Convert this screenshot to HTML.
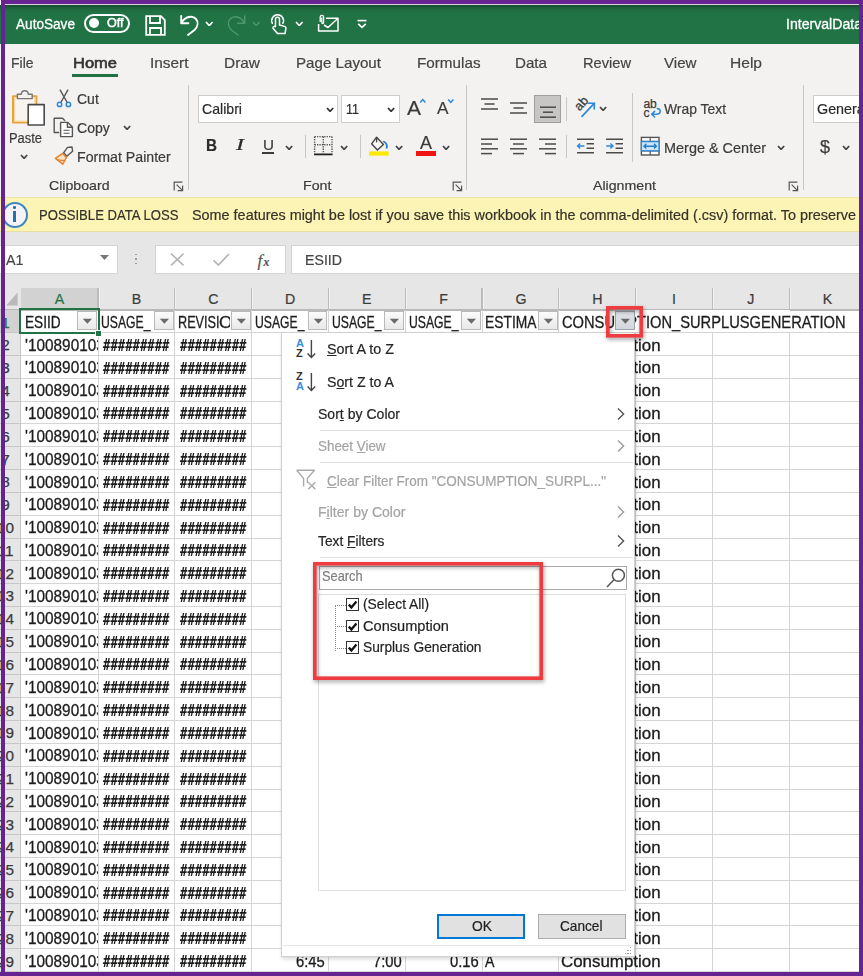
<!DOCTYPE html>
<html lang="en"><head><meta charset="utf-8"><title>Excel filter</title><style>
html,body{margin:0;padding:0}
body{width:863px;height:976px;overflow:hidden;position:relative;background:#f3f2f1;font-family:"Liberation Sans",sans-serif;}
.a{position:absolute;box-sizing:border-box}
.t{position:absolute;white-space:pre;line-height:1;transform-origin:0 0;display:block;-webkit-text-stroke-width:0.2px}
.c{position:absolute;overflow:hidden;box-sizing:border-box}
</style></head><body>
<div class="a" style="left:0px;top:0px;width:863px;height:44px;background:#217346;background:linear-gradient(#174a2d 0,#174a2d 5px,#1b5b37 7px,#1f6c41 10px,#217346 14px);"></div>
<div class="a" style="left:0px;top:44px;width:863px;height:153px;background:#f3f2f1;"></div>
<span class="t" id="t1" style="left:16px;top:16.57px;font-size:14.5px;color:#ffffff;transform:scaleX(0.9381);-webkit-text-stroke-width:0.3px;">AutoSave</span>
<div class="a" style="left:84px;top:13.5px;width:46px;height:19px;border:2px solid #fff;border-radius:10px"></div>
<div class="a" style="left:88.5px;top:18px;width:10px;height:10px;background:#fff;border-radius:5px"></div>
<span class="t" id="t2" style="left:107px;top:16.98px;font-size:12.5px;color:#ffffff;transform:scaleX(1.0028);-webkit-text-stroke-width:0.5px;">Off</span>
<svg class="a" style="left:144px;top:14px;" width="23" height="23" viewBox="0 0 23 23"><g fill="none" stroke="#fff" stroke-width="1.8"><path d="M2.2 2.2 H17 L20.8 6 V20.8 H2.2 Z"/><path d="M6 2.2 V9 H16 V2.2"/><path d="M6 20.8 V14 H17 V20.8"/></g></svg>
<svg class="a" style="left:178px;top:12px;" width="24" height="26" viewBox="0 0 24 26"><g fill="none" stroke="#fff" stroke-width="1.9" stroke-linecap="round" stroke-linejoin="round"><path d="M3.2 4 V11.2 H10.4"/><path d="M3.6 10.8 C7 4.5 14.5 3 18 7 C21 10.5 19.5 15 16.5 18 L10 23"/></g></svg>
<svg class="a" style="left:205px;top:20.5px;" width="8.6" height="5.6" viewBox="0 0 8.6 5.6"><path d="M1 1 L4.3 4.6 L7.6 1" fill="none" stroke="#ffffff" stroke-width="1.6"/></svg>
<svg class="a" style="left:224px;top:12px;" width="24" height="26" viewBox="0 0 24 26"><g fill="none" stroke="#4f966f" stroke-width="1.5" stroke-linecap="round" stroke-linejoin="round"><path d="M20.8 4 V11.2 H13.6"/><path d="M20.4 10.8 C17 4.5 9.5 3 6 7 C3 10.5 4.5 15 7.5 18 L14 23"/></g></svg>
<svg class="a" style="left:252px;top:20.5px;" width="8.6" height="5.6" viewBox="0 0 8.6 5.6"><path d="M1 1 L4.3 4.6 L7.6 1" fill="none" stroke="#4f966f" stroke-width="1.4"/></svg>
<svg class="a" style="left:268px;top:13px;" width="20" height="24" viewBox="0 0 20 24"><g fill="none" stroke="#fff" stroke-width="1.5" stroke-linecap="round" stroke-linejoin="round"><path d="M7.5 12.5 V6.2 a2 2 0 0 1 4 0 V12 l5 1.4 a2 2 0 0 1 1.4 2.3 l-0.9 4.8 H9.5 L5 15.2 a1.6 1.6 0 0 1 2.5 -1.6"/><path d="M4.4 10.4 a5.9 5.9 0 1 1 10.4 0"/></g></svg>
<svg class="a" style="left:295px;top:20.5px;" width="8.6" height="5.6" viewBox="0 0 8.6 5.6"><path d="M1 1 L4.3 4.6 L7.6 1" fill="none" stroke="#ffffff" stroke-width="1.6"/></svg>
<svg class="a" style="left:316px;top:13px;" width="25" height="21" viewBox="0 0 25 21"><g fill="none" stroke="#fff" stroke-width="1.5" stroke-linejoin="round"><path d="M10 5.2 H22 V18 H2.6 V11"/><path d="M8 12 L12 14.5 L21.5 5.8"/><path d="M4.2 9 V4 a1.7 1.7 0 0 1 3.4 0 V9.6 a0.9 0.9 0 0 1 -1.8 0 V4.6" stroke-width="1.3"/></g></svg>
<svg class="a" style="left:356px;top:18px;" width="12" height="12" viewBox="0 0 12 12"><g fill="none" stroke="#fff" stroke-width="1.6"><path d="M1.5 2.6 H10.5"/><path d="M2.2 5.8 L6 9.4 L9.8 5.8"/></g></svg>
<span class="t" id="t3" style="left:786px;top:16.57px;font-size:14.5px;color:#ffffff;transform:scaleX(0.9720);-webkit-text-stroke-width:0.3px;">IntervalData</span>
<span class="t" id="t4" style="left:11px;top:55.45px;font-size:15px;color:#444;transform:scaleX(0.9308);">File</span>
<span class="t" id="t5" style="left:150px;top:55.45px;font-size:15px;color:#444;transform:scaleX(1.0262);">Insert</span>
<span class="t" id="t6" style="left:223.5px;top:55.45px;font-size:15px;color:#444;transform:scaleX(1.0281);">Draw</span>
<span class="t" id="t7" style="left:295.5px;top:55.45px;font-size:15px;color:#444;transform:scaleX(1.0089);">Page Layout</span>
<span class="t" id="t8" style="left:416.5px;top:55.45px;font-size:15px;color:#444;transform:scaleX(1.0157);">Formulas</span>
<span class="t" id="t9" style="left:515px;top:55.45px;font-size:15px;color:#444;transform:scaleX(1.0099);">Data</span>
<span class="t" id="t10" style="left:582.5px;top:55.45px;font-size:15px;color:#444;transform:scaleX(0.9759);">Review</span>
<span class="t" id="t11" style="left:664px;top:55.45px;font-size:15px;color:#444;transform:scaleX(1.0078);">View</span>
<span class="t" id="t12" style="left:730px;top:55.45px;font-size:15px;color:#444;transform:scaleX(1.0370);">Help</span>
<span class="t" id="t13" style="left:72.5px;top:55.45px;font-size:15px;color:#333;transform:scaleX(1.0996);-webkit-text-stroke-width:0.6px;">Home</span>
<div class="a" style="left:72px;top:74px;width:45.5px;height:3px;background:#217346;"></div>
<svg class="a" style="left:10px;top:88px;" width="38" height="40" viewBox="0 0 38 40"><g fill="none" stroke-linejoin="round">
<path d="M3 8.2 H26.4 V34.6 H3 Z" fill="#f8f5f1" stroke="#e9a13b" stroke-width="2"/>
<path d="M4.6 9.8 H24.8 V33 H4.6 Z" fill="none" stroke="#fbdba4" stroke-width="1.2"/>
<path d="M7.4 10.6 V6.2 H11.4 a3.4 3.4 0 0 1 6.8 0 H22.2 V10.6 Z" fill="#f3f2f1" stroke="#777" stroke-width="1.4"/>
<path d="M18.2 16.6 H34.2 V37 H18.2 Z" fill="#fff" stroke="#4a4a4a" stroke-width="1.6"/></g></svg>
<span class="t" id="t14" style="left:9.1px;top:131.4px;font-size:14px;color:#3b3b3b;transform:scaleX(0.9215);">Paste</span>
<svg class="a" style="left:20px;top:154px;" width="8.2" height="5.4" viewBox="0 0 8.2 5.4"><path d="M1 1 L4.1 4.4 L7.2 1" fill="none" stroke="#444" stroke-width="1.7"/></svg>
<svg class="a" style="left:55px;top:88px;" width="18" height="21" viewBox="0 0 18 21"><g fill="none" stroke-linecap="round"><path d="M5.2 2.2 L12.2 14.5 M12.8 2.2 L5.8 14.5" stroke="#555" stroke-width="1.4"/>
<circle cx="4.6" cy="16.4" r="2.2" stroke="#2b88d8" stroke-width="1.5"/><circle cx="13.4" cy="16.4" r="2.2" stroke="#2b88d8" stroke-width="1.5"/></g></svg>
<span class="t" id="t15" style="left:77.3px;top:92.2px;font-size:14px;color:#3b3b3b;transform:scaleX(1.0001);">Cut</span>
<svg class="a" style="left:52px;top:116px;" width="23" height="22" viewBox="0 0 23 22"><g fill="none" stroke="#555" stroke-width="1.4" stroke-linejoin="round"><path d="M7.2 16.5 H2.2 V2.2 H10.5 L13 4.7"/>
<path d="M8.6 6.4 H15.8 L20.4 11 V20.6 H8.6 Z" fill="#fff"/><path d="M15.4 6.6 V11.2 H20.2"/><path d="M11.5 14.2 H17.6 M11.5 17.2 H17.6" stroke-width="1.1"/></g></svg>
<span class="t" id="t16" style="left:77.3px;top:121.1px;font-size:14px;color:#3b3b3b;transform:scaleX(1.0034);">Copy</span>
<svg class="a" style="left:122.5px;top:125px;" width="8.2" height="5.4" viewBox="0 0 8.2 5.4"><path d="M1 1 L4.1 4.4 L7.2 1" fill="none" stroke="#444" stroke-width="1.7"/></svg>
<svg class="a" style="left:53px;top:145px;" width="22" height="22" viewBox="0 0 22 22"><g stroke-linejoin="round"><path d="M14.5 2.4 L19 2 L19.6 6.2 L13.8 11.2 L10.6 7.8 Z" fill="#f3f2f1" stroke="#555" stroke-width="1.4"/>
<path d="M2.4 13.4 L9.6 8.4 L13.4 12.4 L11.6 16 L9.8 19.2 Z" fill="#fbe3c3" stroke="#e8812d" stroke-width="1.5"/><path d="M4.5 14.8 L11.8 15.6" stroke="#e8812d" stroke-width="1.2"/></g></svg>
<span class="t" id="t17" style="left:77.3px;top:149.6px;font-size:14px;color:#3b3b3b;transform:scaleX(1.0119);">Format Painter</span>
<span class="t" id="t18" style="left:48.5px;top:179.03px;font-size:13.5px;color:#3b3b3b;transform:scaleX(1.0468);">Clipboard</span>
<svg class="a" style="left:173px;top:181px;" width="11" height="11" viewBox="0 0 11 11"><g fill="none" stroke="#555" stroke-width="1.2"><path d="M9.4 1.2 H1.2 V9.4"/><path d="M3.6 3.6 L9.2 9.2 M9.6 4.6 V9.6 H4.6"/></g></svg>
<div class="a" style="left:187.5px;top:85px;width:1px;height:105px;background:#c8c6c4;"></div>
<div class="a" style="left:198px;top:95px;width:140px;height:27.5px;background:#fff;border:1px solid #d0cecc;"></div>
<span class="t" id="t19" style="left:202px;top:101.25px;font-size:15px;color:#2b2b2b;transform:scaleX(0.9408);">Calibri</span>
<svg class="a" style="left:325.5px;top:106.5px;" width="8.2" height="5.4" viewBox="0 0 8.2 5.4"><path d="M1 1 L4.1 4.4 L7.2 1" fill="none" stroke="#333" stroke-width="1.7"/></svg>
<div class="a" style="left:341px;top:95px;width:58.5px;height:27.5px;background:#fff;border:1px solid #d0cecc;"></div>
<span class="t" id="t20" style="left:345.5px;top:101.25px;font-size:15px;color:#2b2b2b;transform:scaleX(0.8345);">11</span>
<svg class="a" style="left:387px;top:106.5px;" width="8.2" height="5.4" viewBox="0 0 8.2 5.4"><path d="M1 1 L4.1 4.4 L7.2 1" fill="none" stroke="#333" stroke-width="1.7"/></svg>
<span class="t" id="t21" style="left:406.5px;top:96.65px;font-size:21px;color:#3b3b3b;transform:scaleX(0.9989);">A</span>
<svg class="a" style="left:419px;top:98px;" width="8" height="6" viewBox="0 0 8 6"><path d="M1.2 4.6 L3.8 1.6 L6.4 4.6" fill="none" stroke="#2b88d8" stroke-width="1.5"/></svg>
<span class="t" id="t22" style="left:437px;top:100.05px;font-size:17px;color:#3b3b3b;transform:scaleX(1.0138);">A</span>
<svg class="a" style="left:447px;top:98px;" width="8" height="6" viewBox="0 0 8 6"><path d="M1.2 1.4 L3.8 4.4 L6.4 1.4" fill="none" stroke="#2b88d8" stroke-width="1.5"/></svg>
<span class="t" id="t23" style="left:206px;top:137.9px;font-size:16px;color:#2b2b2b;font-weight:bold;transform:scaleX(0.9514);">B</span>
<span class="t" id="t24" style="left:235.6px;top:137.47px;font-size:16.5px;color:#2b2b2b;font-style:italic;font-family:'Liberation Serif',serif;transform:scaleX(1.4545);">I</span>
<span class="t" id="t25" style="left:262.5px;top:137.32px;font-size:15.5px;color:#3b3b3b;transform:scaleX(0.9819);">U</span>
<div class="a" style="left:262.3px;top:152.3px;width:11.4px;height:1.7px;background:#3b3b3b;"></div>
<svg class="a" style="left:285px;top:144.5px;" width="8.2" height="5.4" viewBox="0 0 8.2 5.4"><path d="M1 1 L4.1 4.4 L7.2 1" fill="none" stroke="#444" stroke-width="1.7"/></svg>
<div class="a" style="left:305px;top:135px;width:1px;height:23px;background:#c8c6c4;"></div>
<svg class="a" style="left:313px;top:135px;" width="21" height="22" viewBox="0 0 21 22"><g fill="none" stroke="#555" stroke-width="1.4" stroke-dasharray="1.3 1.1"><path d="M1.6 1.6 H19 M1.6 1.6 V18 M19 1.6 V18 M10.3 1.6 V18 M1.6 9.8 H19"/></g><path d="M1 19.4 H19.6" stroke="#222" stroke-width="1.8"/></svg>
<svg class="a" style="left:340px;top:144.5px;" width="8.2" height="5.4" viewBox="0 0 8.2 5.4"><path d="M1 1 L4.1 4.4 L7.2 1" fill="none" stroke="#444" stroke-width="1.7"/></svg>
<div class="a" style="left:360px;top:135px;width:1px;height:23px;background:#c8c6c4;"></div>
<svg class="a" style="left:368px;top:134px;" width="22" height="24" viewBox="0 0 22 24"><g fill="none" stroke-linejoin="round"><path d="M8.6 3.2 L15.4 10.4 L9.4 16 L3.6 9.8 Z" stroke="#444" stroke-width="1.4" fill="#f8f8f8"/><path d="M8.6 3.2 V8.4" stroke="#444" stroke-width="1.3"/>
<path d="M15.2 7.2 C18.4 8.6 19.4 11.4 18.6 14.4" stroke="#2b7cd3" stroke-width="1.8"/></g><rect x="1" y="17.4" width="19.6" height="4.2" fill="#ffeb00"/></svg>
<svg class="a" style="left:395px;top:144.5px;" width="8.2" height="5.4" viewBox="0 0 8.2 5.4"><path d="M1 1 L4.1 4.4 L7.2 1" fill="none" stroke="#444" stroke-width="1.7"/></svg>
<span class="t" id="t26" style="left:420px;top:135.12px;font-size:17.5px;color:#3b3b3b;transform:scaleX(1.0267);">A</span>
<div class="a" style="left:416px;top:151.4px;width:20px;height:4.2px;background:#f01515;"></div>
<svg class="a" style="left:442px;top:144.5px;" width="8.2" height="5.4" viewBox="0 0 8.2 5.4"><path d="M1 1 L4.1 4.4 L7.2 1" fill="none" stroke="#444" stroke-width="1.7"/></svg>
<span class="t" id="t27" style="left:302.5px;top:179.03px;font-size:13.5px;color:#3b3b3b;transform:scaleX(1.0549);">Font</span>
<svg class="a" style="left:451.5px;top:181px;" width="11" height="11" viewBox="0 0 11 11"><g fill="none" stroke="#555" stroke-width="1.2"><path d="M9.4 1.2 H1.2 V9.4"/><path d="M3.6 3.6 L9.2 9.2 M9.6 4.6 V9.6 H4.6"/></g></svg>
<div class="a" style="left:466px;top:85px;width:1px;height:105px;background:#c8c6c4;"></div>
<svg class="a" style="left:480px;top:95px;" width="20" height="20" viewBox="0 0 20 20"><g stroke="#4a4a4a" stroke-width="1.5"><path d="M1 4 H18"/><path d="M4.5 9 H14.5"/><path d="M1 14 H18"/></g></svg>
<svg class="a" style="left:509px;top:99px;" width="20" height="20" viewBox="0 0 20 20"><g stroke="#4a4a4a" stroke-width="1.5"><path d="M1 4 H18"/><path d="M4.5 9 H14.5"/><path d="M1 14 H18"/></g></svg>
<div class="a" style="left:534px;top:95px;width:26.5px;height:27.5px;background:#c8c6c4;border:1px solid #a19f9d;"></div>
<svg class="a" style="left:538px;top:103px;" width="20" height="20" viewBox="0 0 20 20"><g stroke="#4a4a4a" stroke-width="1.5"><path d="M2 4.2 H18"/><path d="M5 9.2 H15"/><path d="M2 14.2 H18"/></g></svg>
<div class="a" style="left:566px;top:97px;width:1px;height:24px;background:#c8c6c4;"></div>
<svg class="a" style="left:573px;top:95px;" width="26" height="24" viewBox="0 0 26 24"><text x="0" y="0" font-family="Liberation Sans, sans-serif" font-size="12.6" fill="#3b3b3b" stroke="#3b3b3b" stroke-width="0.3" transform="translate(6.4 16.4) rotate(-47)">ab</text>
<g fill="none" stroke="#2b88d8" stroke-width="1.6" stroke-linecap="round"><path d="M9 21.4 L21 8.6"/><path d="M15.4 8.2 L21.4 8.2 L21.2 14"/></g></svg>
<svg class="a" style="left:599px;top:105.5px;" width="8.2" height="5.4" viewBox="0 0 8.2 5.4"><path d="M1 1 L4.1 4.4 L7.2 1" fill="none" stroke="#444" stroke-width="1.7"/></svg>
<svg class="a" style="left:480px;top:135px;" width="20" height="20" viewBox="0 0 20 20"><g stroke="#4a4a4a" stroke-width="1.5"><path d="M1 4.2 H18"/><path d="M1 9 H12"/><path d="M1 13.8 H18"/><path d="M1 18.6 H12"/></g></svg>
<svg class="a" style="left:509px;top:135px;" width="20" height="20" viewBox="0 0 20 20"><g stroke="#4a4a4a" stroke-width="1.5"><path d="M1 4.2 H18"/><path d="M4 9 H15"/><path d="M1 13.8 H18"/><path d="M4 18.6 H15"/></g></svg>
<svg class="a" style="left:538px;top:135px;" width="20" height="20" viewBox="0 0 20 20"><g stroke="#4a4a4a" stroke-width="1.5"><path d="M1 4.2 H18"/><path d="M7 9 H18"/><path d="M1 13.8 H18"/><path d="M7 18.6 H18"/></g></svg>
<div class="a" style="left:566px;top:135px;width:1px;height:23px;background:#c8c6c4;"></div>
<svg class="a" style="left:575.5px;top:137px;" width="20" height="18" viewBox="0 0 20 18"><g stroke="#4a4a4a" stroke-width="1.5"><path d="M1 2.2 H18 M10.6 6.8 H18 M10.6 11.2 H18 M1 15.8 H18"/></g><path d="M1.6 9 H8.4 M4.2 6.4 L1.6 9 L4.2 11.6" stroke="#2b88d8" fill="none" stroke-width="1.4"/></svg>
<svg class="a" style="left:604.5px;top:137px;" width="20" height="18" viewBox="0 0 20 18"><g stroke="#4a4a4a" stroke-width="1.5"><path d="M1 2.2 H18 M10.6 6.8 H18 M10.6 11.2 H18 M1 15.8 H18"/></g><path d="M1.2 9 H8 M5.4 6.4 L8 9 L5.4 11.6" stroke="#2b88d8" fill="none" stroke-width="1.4"/></svg>
<div class="a" style="left:632px;top:93px;width:1px;height:69px;background:#c8c6c4;"></div>
<svg class="a" style="left:641px;top:97px;" width="22" height="22" viewBox="0 0 22 22"><text x="2.4" y="10.6" font-family="Liberation Sans, sans-serif" font-size="12" fill="#3b3b3b" stroke="#3b3b3b" stroke-width="0.25">ab</text><text x="2.4" y="20.2" font-family="Liberation Sans, sans-serif" font-size="12" fill="#3b3b3b" stroke="#3b3b3b" stroke-width="0.25">c</text>
<g fill="none" stroke="#2b88d8" stroke-width="1.6" stroke-linecap="round" stroke-linejoin="round"><path d="M16.4 11.6 C20.4 11.8 20.2 17.2 15.4 17.2 H11"/><path d="M13.6 14.4 L10.8 17.2 L13.6 20"/></g></svg>
<span class="t" id="t28" style="left:664px;top:101.25px;font-size:15px;color:#3b3b3b;transform:scaleX(0.9256);">Wrap Text</span>
<svg class="a" style="left:640px;top:136px;" width="21" height="21" viewBox="0 0 21 21"><rect x="1.4" y="1.4" width="17.6" height="17.6" fill="#fff" stroke="#555" stroke-width="1.4"/><path d="M1.4 5.4 H19 M1.4 15 H19 M10.2 1.4 V5.4 M10.2 15 V19" stroke="#555" stroke-width="1.2" fill="none"/>
<rect x="1.4" y="5.6" width="17.6" height="9.2" fill="#cfe6fa" stroke="#2b88d8" stroke-width="1.3"/><path d="M4 10.2 H16.4 M6.4 7.8 L4 10.2 L6.4 12.6 M14 7.8 L16.4 10.2 L14 12.6" stroke="#1e7dc8" stroke-width="1.4" fill="none"/></svg>
<span class="t" id="t29" style="left:664px;top:139.75px;font-size:15px;color:#3b3b3b;transform:scaleX(0.9633);">Merge &amp; Center</span>
<svg class="a" style="left:777px;top:144.5px;" width="8.2" height="5.4" viewBox="0 0 8.2 5.4"><path d="M1 1 L4.1 4.4 L7.2 1" fill="none" stroke="#444" stroke-width="1.7"/></svg>
<span class="t" id="t30" style="left:593px;top:179.03px;font-size:13.5px;color:#3b3b3b;transform:scaleX(1.0492);">Alignment</span>
<svg class="a" style="left:787.5px;top:181px;" width="11" height="11" viewBox="0 0 11 11"><g fill="none" stroke="#555" stroke-width="1.2"><path d="M9.4 1.2 H1.2 V9.4"/><path d="M3.6 3.6 L9.2 9.2 M9.6 4.6 V9.6 H4.6"/></g></svg>
<div class="a" style="left:802.5px;top:85px;width:1px;height:105px;background:#c8c6c4;"></div>
<div class="a" style="left:812.5px;top:95px;width:60px;height:27.5px;background:#fff;border:1px solid #d0cecc;"></div>
<span class="t" id="t31" style="left:817px;top:101.25px;font-size:15px;color:#2b2b2b;transform:scaleX(0.9555);">General</span>
<span class="t" id="t32" style="left:820px;top:136.85px;font-size:19px;color:#3b3b3b;transform:scaleX(0.9453);">$</span>
<svg class="a" style="left:842px;top:144.5px;" width="8.2" height="5.4" viewBox="0 0 8.2 5.4"><path d="M1 1 L4.1 4.4 L7.2 1" fill="none" stroke="#444" stroke-width="1.7"/></svg>
<div class="a" style="left:0px;top:196.5px;width:863px;height:35px;background:#fcf4b4;border-top:1px solid #ece5a4;border-bottom:1px solid #e6dfa0;"></div>
<div class="a" style="left:1.6px;top:201.6px;width:26.4px;height:26.4px;border:2px solid #3a86bd;border-radius:50%;background:#f6f3f6"></div>
<div class="a" style="left:13.2px;top:206.2px;width:2.6px;height:2.6px;background:#1e73b0;border-radius:1.3px;"></div>
<div class="a" style="left:13.3px;top:211.2px;width:2.4px;height:10.6px;background:#1e73b0;"></div>
<span class="t" id="t33" style="left:39.3px;top:207.7px;font-size:14px;color:#35332a;transform:scaleX(0.9370);">POSSIBLE DATA LOSS</span>
<span class="t" id="t34" style="left:192px;top:207.7px;font-size:14px;color:#35332a;transform:scaleX(1.0286);">Some features might be lost if you save this workbook in the comma-delimited (.csv) format. To preserve t</span>
<div class="a" style="left:0px;top:231.5px;width:863px;height:56px;background:#e6e6e6;"></div>
<div class="a" style="left:0px;top:244.5px;width:118px;height:29.5px;background:#fff;border:1px solid #d4d4d4;border-left:0;"></div>
<span class="t" id="t35" style="left:6px;top:251.82px;font-size:15.5px;color:#444;transform:scaleX(0.9226);">A1</span>
<svg class="a" style="left:99px;top:254px;" width="11" height="7" viewBox="0 0 11 7"><path d="M1 1 H10 L5.5 6 Z" fill="#777"/></svg>
<div class="a" style="left:135.3px;top:253.5px;width:1.6px;height:1.6px;background:#9a9a9a;"></div>
<div class="a" style="left:135.3px;top:258px;width:1.6px;height:1.6px;background:#9a9a9a;"></div>
<div class="a" style="left:135.3px;top:262.5px;width:1.6px;height:1.6px;background:#9a9a9a;"></div>
<div class="a" style="left:155px;top:244.5px;width:131px;height:29.5px;background:#fff;border:1px solid #d4d4d4;"></div>
<svg class="a" style="left:169px;top:252px;" width="17" height="15" viewBox="0 0 17 15"><path d="M2 1.6 L14.6 13.4 M14.6 1.6 L2 13.4" stroke="#b4b4b4" stroke-width="1.5" fill="none"/></svg>
<svg class="a" style="left:212px;top:252px;" width="19" height="15" viewBox="0 0 19 15"><path d="M1.6 8.4 L6.4 13 L17 2" stroke="#b4b4b4" stroke-width="1.7" fill="none"/></svg>
<span class="t" id="t36" style="left:257.5px;top:251.55px;font-size:17px;color:#555;font-style:italic;font-family:'Liberation Serif',serif;">f</span>
<span class="t" id="t37" style="left:263.5px;top:257.23px;font-size:11.5px;color:#555;font-weight:bold;font-style:italic;font-family:'Liberation Serif',serif;">x</span>
<div class="a" style="left:290.5px;top:244.5px;width:580px;height:29.5px;background:#fff;border:1px solid #d4d4d4;"></div>
<span class="t" id="t38" style="left:305px;top:251.82px;font-size:15.5px;color:#444;transform:scaleX(0.9139);">ESIID</span>
<div class="a" style="left:0px;top:309.8px;width:863px;height:666.2px;background:#fff;"></div>
<div class="a" style="left:0px;top:287.5px;width:863px;height:22.3px;background:#e6e6e6;"></div>
<div class="a" style="left:21.2px;top:287.5px;width:76.8px;height:21.8px;background:#d2d2d2;"></div>
<svg class="a" style="left:5px;top:291px;" width="14" height="16" viewBox="0 0 14 16"><path d="M12.6 1.4 V14.6 H1.2 Z" fill="#b9b9b9"/></svg>
<span class="t" id="t39" style="left:54.6px;top:291.83px;font-size:14.2px;color:#217346;width:10px;text-align:center;">A</span>
<span class="t" id="t40" style="left:131.4px;top:291.83px;font-size:14.2px;color:#3c3c3c;width:10px;text-align:center;">B</span>
<div class="a" style="left:97.4px;top:287.8px;width:1.2px;height:22px;background:#bcbcbc;"></div>
<div class="a" style="left:98.6px;top:287.8px;width:1px;height:22px;background:rgba(255,255,255,.45);"></div>
<span class="t" id="t41" style="left:208.2px;top:291.83px;font-size:14.2px;color:#3c3c3c;width:10px;text-align:center;">C</span>
<div class="a" style="left:174.2px;top:287.8px;width:1.2px;height:22px;background:#bcbcbc;"></div>
<div class="a" style="left:175.4px;top:287.8px;width:1px;height:22px;background:rgba(255,255,255,.45);"></div>
<span class="t" id="t42" style="left:285px;top:291.83px;font-size:14.2px;color:#3c3c3c;width:10px;text-align:center;">D</span>
<div class="a" style="left:251px;top:287.8px;width:1.2px;height:22px;background:#bcbcbc;"></div>
<div class="a" style="left:252.2px;top:287.8px;width:1px;height:22px;background:rgba(255,255,255,.45);"></div>
<span class="t" id="t43" style="left:361.8px;top:291.83px;font-size:14.2px;color:#3c3c3c;width:10px;text-align:center;">E</span>
<div class="a" style="left:327.8px;top:287.8px;width:1.2px;height:22px;background:#bcbcbc;"></div>
<div class="a" style="left:329px;top:287.8px;width:1px;height:22px;background:rgba(255,255,255,.45);"></div>
<span class="t" id="t44" style="left:438.6px;top:291.83px;font-size:14.2px;color:#3c3c3c;width:10px;text-align:center;">F</span>
<div class="a" style="left:404.6px;top:287.8px;width:1.2px;height:22px;background:#bcbcbc;"></div>
<div class="a" style="left:405.8px;top:287.8px;width:1px;height:22px;background:rgba(255,255,255,.45);"></div>
<span class="t" id="t45" style="left:515.4px;top:291.83px;font-size:14.2px;color:#3c3c3c;width:10px;text-align:center;">G</span>
<div class="a" style="left:481.4px;top:287.8px;width:1.2px;height:22px;background:#bcbcbc;"></div>
<div class="a" style="left:482.6px;top:287.8px;width:1px;height:22px;background:rgba(255,255,255,.45);"></div>
<span class="t" id="t46" style="left:592.2px;top:291.83px;font-size:14.2px;color:#3c3c3c;width:10px;text-align:center;">H</span>
<div class="a" style="left:558.2px;top:287.8px;width:1.2px;height:22px;background:#bcbcbc;"></div>
<div class="a" style="left:559.4px;top:287.8px;width:1px;height:22px;background:rgba(255,255,255,.45);"></div>
<span class="t" id="t47" style="left:669px;top:291.83px;font-size:14.2px;color:#3c3c3c;width:10px;text-align:center;">I</span>
<div class="a" style="left:635px;top:287.8px;width:1.2px;height:22px;background:#bcbcbc;"></div>
<div class="a" style="left:636.2px;top:287.8px;width:1px;height:22px;background:rgba(255,255,255,.45);"></div>
<span class="t" id="t48" style="left:745.8px;top:291.83px;font-size:14.2px;color:#3c3c3c;width:10px;text-align:center;">J</span>
<div class="a" style="left:711.8px;top:287.8px;width:1.2px;height:22px;background:#bcbcbc;"></div>
<div class="a" style="left:713px;top:287.8px;width:1px;height:22px;background:rgba(255,255,255,.45);"></div>
<span class="t" id="t49" style="left:822.6px;top:291.83px;font-size:14.2px;color:#3c3c3c;width:10px;text-align:center;">K</span>
<div class="a" style="left:788.6px;top:287.8px;width:1.2px;height:22px;background:#bcbcbc;"></div>
<div class="a" style="left:789.8px;top:287.8px;width:1px;height:22px;background:rgba(255,255,255,.45);"></div>
<div class="a" style="left:0px;top:309px;width:863px;height:1.5px;background:#b9b9b9;"></div>
<div class="a" style="left:0px;top:309.8px;width:20.7px;height:666.2px;background:#e6e6e6;border-right:1px solid #c6c6c6;"></div>
<div class="a" style="left:0px;top:309.8px;width:20.7px;height:22.82px;background:#d2d2d2;border-right:2px solid #217346;"></div>
<div class="a" style="left:21.2px;top:332.12px;width:841.8px;height:1px;background:#d5d5d5;"></div>
<div class="a" style="left:0px;top:332.12px;width:20.7px;height:1px;background:#c6c6c6;"></div>
<div class="a" style="left:21.2px;top:354.94px;width:841.8px;height:1px;background:#d5d5d5;"></div>
<div class="a" style="left:0px;top:354.94px;width:20.7px;height:1px;background:#c6c6c6;"></div>
<div class="a" style="left:21.2px;top:377.76px;width:841.8px;height:1px;background:#d5d5d5;"></div>
<div class="a" style="left:0px;top:377.76px;width:20.7px;height:1px;background:#c6c6c6;"></div>
<div class="a" style="left:21.2px;top:400.58px;width:841.8px;height:1px;background:#d5d5d5;"></div>
<div class="a" style="left:0px;top:400.58px;width:20.7px;height:1px;background:#c6c6c6;"></div>
<div class="a" style="left:21.2px;top:423.4px;width:841.8px;height:1px;background:#d5d5d5;"></div>
<div class="a" style="left:0px;top:423.4px;width:20.7px;height:1px;background:#c6c6c6;"></div>
<div class="a" style="left:21.2px;top:446.22px;width:841.8px;height:1px;background:#d5d5d5;"></div>
<div class="a" style="left:0px;top:446.22px;width:20.7px;height:1px;background:#c6c6c6;"></div>
<div class="a" style="left:21.2px;top:469.04px;width:841.8px;height:1px;background:#d5d5d5;"></div>
<div class="a" style="left:0px;top:469.04px;width:20.7px;height:1px;background:#c6c6c6;"></div>
<div class="a" style="left:21.2px;top:491.86px;width:841.8px;height:1px;background:#d5d5d5;"></div>
<div class="a" style="left:0px;top:491.86px;width:20.7px;height:1px;background:#c6c6c6;"></div>
<div class="a" style="left:21.2px;top:514.68px;width:841.8px;height:1px;background:#d5d5d5;"></div>
<div class="a" style="left:0px;top:514.68px;width:20.7px;height:1px;background:#c6c6c6;"></div>
<div class="a" style="left:21.2px;top:537.5px;width:841.8px;height:1px;background:#d5d5d5;"></div>
<div class="a" style="left:0px;top:537.5px;width:20.7px;height:1px;background:#c6c6c6;"></div>
<div class="a" style="left:21.2px;top:560.32px;width:841.8px;height:1px;background:#d5d5d5;"></div>
<div class="a" style="left:0px;top:560.32px;width:20.7px;height:1px;background:#c6c6c6;"></div>
<div class="a" style="left:21.2px;top:583.14px;width:841.8px;height:1px;background:#d5d5d5;"></div>
<div class="a" style="left:0px;top:583.14px;width:20.7px;height:1px;background:#c6c6c6;"></div>
<div class="a" style="left:21.2px;top:605.96px;width:841.8px;height:1px;background:#d5d5d5;"></div>
<div class="a" style="left:0px;top:605.96px;width:20.7px;height:1px;background:#c6c6c6;"></div>
<div class="a" style="left:21.2px;top:628.78px;width:841.8px;height:1px;background:#d5d5d5;"></div>
<div class="a" style="left:0px;top:628.78px;width:20.7px;height:1px;background:#c6c6c6;"></div>
<div class="a" style="left:21.2px;top:651.6px;width:841.8px;height:1px;background:#d5d5d5;"></div>
<div class="a" style="left:0px;top:651.6px;width:20.7px;height:1px;background:#c6c6c6;"></div>
<div class="a" style="left:21.2px;top:674.42px;width:841.8px;height:1px;background:#d5d5d5;"></div>
<div class="a" style="left:0px;top:674.42px;width:20.7px;height:1px;background:#c6c6c6;"></div>
<div class="a" style="left:21.2px;top:697.24px;width:841.8px;height:1px;background:#d5d5d5;"></div>
<div class="a" style="left:0px;top:697.24px;width:20.7px;height:1px;background:#c6c6c6;"></div>
<div class="a" style="left:21.2px;top:720.06px;width:841.8px;height:1px;background:#d5d5d5;"></div>
<div class="a" style="left:0px;top:720.06px;width:20.7px;height:1px;background:#c6c6c6;"></div>
<div class="a" style="left:21.2px;top:742.88px;width:841.8px;height:1px;background:#d5d5d5;"></div>
<div class="a" style="left:0px;top:742.88px;width:20.7px;height:1px;background:#c6c6c6;"></div>
<div class="a" style="left:21.2px;top:765.7px;width:841.8px;height:1px;background:#d5d5d5;"></div>
<div class="a" style="left:0px;top:765.7px;width:20.7px;height:1px;background:#c6c6c6;"></div>
<div class="a" style="left:21.2px;top:788.52px;width:841.8px;height:1px;background:#d5d5d5;"></div>
<div class="a" style="left:0px;top:788.52px;width:20.7px;height:1px;background:#c6c6c6;"></div>
<div class="a" style="left:21.2px;top:811.34px;width:841.8px;height:1px;background:#d5d5d5;"></div>
<div class="a" style="left:0px;top:811.34px;width:20.7px;height:1px;background:#c6c6c6;"></div>
<div class="a" style="left:21.2px;top:834.16px;width:841.8px;height:1px;background:#d5d5d5;"></div>
<div class="a" style="left:0px;top:834.16px;width:20.7px;height:1px;background:#c6c6c6;"></div>
<div class="a" style="left:21.2px;top:856.98px;width:841.8px;height:1px;background:#d5d5d5;"></div>
<div class="a" style="left:0px;top:856.98px;width:20.7px;height:1px;background:#c6c6c6;"></div>
<div class="a" style="left:21.2px;top:879.8px;width:841.8px;height:1px;background:#d5d5d5;"></div>
<div class="a" style="left:0px;top:879.8px;width:20.7px;height:1px;background:#c6c6c6;"></div>
<div class="a" style="left:21.2px;top:902.62px;width:841.8px;height:1px;background:#d5d5d5;"></div>
<div class="a" style="left:0px;top:902.62px;width:20.7px;height:1px;background:#c6c6c6;"></div>
<div class="a" style="left:21.2px;top:925.44px;width:841.8px;height:1px;background:#d5d5d5;"></div>
<div class="a" style="left:0px;top:925.44px;width:20.7px;height:1px;background:#c6c6c6;"></div>
<div class="a" style="left:21.2px;top:948.26px;width:841.8px;height:1px;background:#d5d5d5;"></div>
<div class="a" style="left:0px;top:948.26px;width:20.7px;height:1px;background:#c6c6c6;"></div>
<div class="a" style="left:21.2px;top:971.08px;width:841.8px;height:1px;background:#d5d5d5;"></div>
<div class="a" style="left:0px;top:971.08px;width:20.7px;height:1px;background:#c6c6c6;"></div>
<div class="a" style="left:21.2px;top:993.9px;width:841.8px;height:1px;background:#d5d5d5;"></div>
<div class="a" style="left:0px;top:993.9px;width:20.7px;height:1px;background:#c6c6c6;"></div>
<div class="a" style="left:97.5px;top:309.8px;width:1px;height:666.2px;background:#d5d5d5;"></div>
<div class="a" style="left:174.3px;top:309.8px;width:1px;height:666.2px;background:#d5d5d5;"></div>
<div class="a" style="left:251.1px;top:309.8px;width:1px;height:666.2px;background:#d5d5d5;"></div>
<div class="a" style="left:327.9px;top:309.8px;width:1px;height:666.2px;background:#d5d5d5;"></div>
<div class="a" style="left:404.7px;top:309.8px;width:1px;height:666.2px;background:#d5d5d5;"></div>
<div class="a" style="left:481.5px;top:309.8px;width:1px;height:666.2px;background:#d5d5d5;"></div>
<div class="a" style="left:558.3px;top:309.8px;width:1px;height:666.2px;background:#d5d5d5;"></div>
<div class="a" style="left:635.1px;top:309.8px;width:1px;height:666.2px;background:#d5d5d5;"></div>
<div class="a" style="left:711.9px;top:309.8px;width:1px;height:666.2px;background:#d5d5d5;"></div>
<div class="a" style="left:788.7px;top:309.8px;width:1px;height:666.2px;background:#d5d5d5;"></div>
<div class="a" style="left:865.5px;top:309.8px;width:1px;height:666.2px;background:#d5d5d5;"></div>
<span class="t" id="t50" style="left:-24.4px;top:314.6px;font-size:15.3px;color:#217346;width:60px;text-align:center;-webkit-text-stroke:0.25px;">1</span>
<span class="t" id="t51" style="left:-24.4px;top:337.42px;font-size:15.3px;color:#3a3a3a;width:60px;text-align:center;-webkit-text-stroke:0.25px;">2</span>
<span class="t" id="t52" style="left:-24.4px;top:360.24px;font-size:15.3px;color:#3a3a3a;width:60px;text-align:center;-webkit-text-stroke:0.25px;">3</span>
<span class="t" id="t53" style="left:-24.4px;top:383.06px;font-size:15.3px;color:#3a3a3a;width:60px;text-align:center;-webkit-text-stroke:0.25px;">4</span>
<span class="t" id="t54" style="left:-24.4px;top:405.88px;font-size:15.3px;color:#3a3a3a;width:60px;text-align:center;-webkit-text-stroke:0.25px;">5</span>
<span class="t" id="t55" style="left:-24.4px;top:428.69px;font-size:15.3px;color:#3a3a3a;width:60px;text-align:center;-webkit-text-stroke:0.25px;">6</span>
<span class="t" id="t56" style="left:-24.4px;top:451.52px;font-size:15.3px;color:#3a3a3a;width:60px;text-align:center;-webkit-text-stroke:0.25px;">7</span>
<span class="t" id="t57" style="left:-24.4px;top:474.34px;font-size:15.3px;color:#3a3a3a;width:60px;text-align:center;-webkit-text-stroke:0.25px;">8</span>
<span class="t" id="t58" style="left:-24.4px;top:497.16px;font-size:15.3px;color:#3a3a3a;width:60px;text-align:center;-webkit-text-stroke:0.25px;">9</span>
<span class="t" id="t59" style="left:-24.4px;top:519.98px;font-size:15.3px;color:#3a3a3a;width:60px;text-align:center;-webkit-text-stroke:0.25px;">10</span>
<span class="t" id="t60" style="left:-24.4px;top:542.79px;font-size:15.3px;color:#3a3a3a;width:60px;text-align:center;-webkit-text-stroke:0.25px;">11</span>
<span class="t" id="t61" style="left:-24.4px;top:565.62px;font-size:15.3px;color:#3a3a3a;width:60px;text-align:center;-webkit-text-stroke:0.25px;">12</span>
<span class="t" id="t62" style="left:-24.4px;top:588.44px;font-size:15.3px;color:#3a3a3a;width:60px;text-align:center;-webkit-text-stroke:0.25px;">13</span>
<span class="t" id="t63" style="left:-24.4px;top:611.25px;font-size:15.3px;color:#3a3a3a;width:60px;text-align:center;-webkit-text-stroke:0.25px;">14</span>
<span class="t" id="t64" style="left:-24.4px;top:634.07px;font-size:15.3px;color:#3a3a3a;width:60px;text-align:center;-webkit-text-stroke:0.25px;">15</span>
<span class="t" id="t65" style="left:-24.4px;top:656.89px;font-size:15.3px;color:#3a3a3a;width:60px;text-align:center;-webkit-text-stroke:0.25px;">16</span>
<span class="t" id="t66" style="left:-24.4px;top:679.72px;font-size:15.3px;color:#3a3a3a;width:60px;text-align:center;-webkit-text-stroke:0.25px;">17</span>
<span class="t" id="t67" style="left:-24.4px;top:702.53px;font-size:15.3px;color:#3a3a3a;width:60px;text-align:center;-webkit-text-stroke:0.25px;">18</span>
<span class="t" id="t68" style="left:-24.4px;top:725.35px;font-size:15.3px;color:#3a3a3a;width:60px;text-align:center;-webkit-text-stroke:0.25px;">19</span>
<span class="t" id="t69" style="left:-24.4px;top:748.17px;font-size:15.3px;color:#3a3a3a;width:60px;text-align:center;-webkit-text-stroke:0.25px;">20</span>
<span class="t" id="t70" style="left:-24.4px;top:771px;font-size:15.3px;color:#3a3a3a;width:60px;text-align:center;-webkit-text-stroke:0.25px;">21</span>
<span class="t" id="t71" style="left:-24.4px;top:793.81px;font-size:15.3px;color:#3a3a3a;width:60px;text-align:center;-webkit-text-stroke:0.25px;">22</span>
<span class="t" id="t72" style="left:-24.4px;top:816.63px;font-size:15.3px;color:#3a3a3a;width:60px;text-align:center;-webkit-text-stroke:0.25px;">23</span>
<span class="t" id="t73" style="left:-24.4px;top:839.46px;font-size:15.3px;color:#3a3a3a;width:60px;text-align:center;-webkit-text-stroke:0.25px;">24</span>
<span class="t" id="t74" style="left:-24.4px;top:862.27px;font-size:15.3px;color:#3a3a3a;width:60px;text-align:center;-webkit-text-stroke:0.25px;">25</span>
<span class="t" id="t75" style="left:-24.4px;top:885.09px;font-size:15.3px;color:#3a3a3a;width:60px;text-align:center;-webkit-text-stroke:0.25px;">26</span>
<span class="t" id="t76" style="left:-24.4px;top:907.92px;font-size:15.3px;color:#3a3a3a;width:60px;text-align:center;-webkit-text-stroke:0.25px;">27</span>
<span class="t" id="t77" style="left:-24.4px;top:930.74px;font-size:15.3px;color:#3a3a3a;width:60px;text-align:center;-webkit-text-stroke:0.25px;">28</span>
<span class="t" id="t78" style="left:-24.4px;top:953.55px;font-size:15.3px;color:#3a3a3a;width:60px;text-align:center;-webkit-text-stroke:0.25px;">29</span>
<div class="c" style="left:21.2px;top:309.8px;width:76.3px;height:22.82px">
<span class="t" id="t79" style="left:3.4px;top:3.97px;font-size:16.5px;color:#1c1c1c;transform:scaleX(0.8258);-webkit-text-stroke:0.3px #1c1c1c;">ESIID</span>
</div>
<div class="c" style="left:98px;top:309.8px;width:76.3px;height:22.82px">
<span class="t" id="t80" style="left:3.4px;top:3.97px;font-size:16.5px;color:#1c1c1c;transform:scaleX(0.7393);-webkit-text-stroke:0.3px #1c1c1c;">USAGE_</span>
</div>
<div class="c" style="left:174.8px;top:309.8px;width:55.6px;height:22.82px">
<span class="t" id="t81" style="left:3.2px;top:3.97px;font-size:16.5px;color:#1c1c1c;transform:scaleX(0.7688);-webkit-text-stroke:0.3px #1c1c1c;">REVISI</span>
<span class="t" id="t82" style="left:44.4px;top:3.97px;font-size:16.5px;color:#1c1c1c;transform:scaleX(1.0505);-webkit-text-stroke:0.3px #1c1c1c;">ON</span>
</div>
<div class="c" style="left:251.6px;top:309.8px;width:76.3px;height:22.82px">
<span class="t" id="t83" style="left:3.4px;top:3.97px;font-size:16.5px;color:#1c1c1c;transform:scaleX(0.7393);-webkit-text-stroke:0.3px #1c1c1c;">USAGE_</span>
</div>
<div class="c" style="left:328.4px;top:309.8px;width:76.3px;height:22.82px">
<span class="t" id="t84" style="left:3.4px;top:3.97px;font-size:16.5px;color:#1c1c1c;transform:scaleX(0.7393);-webkit-text-stroke:0.3px #1c1c1c;">USAGE_</span>
</div>
<div class="c" style="left:405.2px;top:309.8px;width:76.3px;height:22.82px">
<span class="t" id="t85" style="left:3.4px;top:3.97px;font-size:16.5px;color:#1c1c1c;transform:scaleX(0.7393);-webkit-text-stroke:0.3px #1c1c1c;">USAGE_</span>
</div>
<div class="c" style="left:482px;top:309.8px;width:76.3px;height:22.82px">
<span class="t" id="t86" style="left:3.4px;top:3.97px;font-size:16.5px;color:#1c1c1c;transform:scaleX(0.8383);-webkit-text-stroke:0.3px #1c1c1c;">ESTIMA</span>
</div>
<div class="a" style="left:634.6px;top:310.3px;width:155.6px;height:21.62px;background:#fff;"></div>
<div class="c" style="left:558.8px;top:309.8px;width:300px;height:22.82px">
<span class="t" id="t87" style="left:3.2px;top:3.97px;font-size:16.5px;color:#1c1c1c;transform:scaleX(0.8894);-webkit-text-stroke:0.3px #1c1c1c;">CONSUMPTION_SURPLUSGENERATION</span>
</div>
<div class="a" style="left:77.2px;top:311.4px;width:19.8px;height:18.8px;background:linear-gradient(#fbfbfb,#e9e9e9);border:1px solid #b9b9b9"></div>
<svg class="a" style="left:82.2px;top:318.4px;" width="11" height="7" viewBox="0 0 11 7"><path d="M0.8 0.8 H10 L5.4 5.8 Z" fill="#6a6a6a"/></svg>
<div class="a" style="left:154px;top:311.4px;width:19.8px;height:18.8px;background:linear-gradient(#fbfbfb,#e9e9e9);border:1px solid #b9b9b9"></div>
<svg class="a" style="left:159px;top:318.4px;" width="11" height="7" viewBox="0 0 11 7"><path d="M0.8 0.8 H10 L5.4 5.8 Z" fill="#6a6a6a"/></svg>
<div class="a" style="left:230.8px;top:311.4px;width:19.8px;height:18.8px;background:linear-gradient(#fbfbfb,#e9e9e9);border:1px solid #b9b9b9"></div>
<svg class="a" style="left:235.8px;top:318.4px;" width="11" height="7" viewBox="0 0 11 7"><path d="M0.8 0.8 H10 L5.4 5.8 Z" fill="#6a6a6a"/></svg>
<div class="a" style="left:307.6px;top:311.4px;width:19.8px;height:18.8px;background:linear-gradient(#fbfbfb,#e9e9e9);border:1px solid #b9b9b9"></div>
<svg class="a" style="left:312.6px;top:318.4px;" width="11" height="7" viewBox="0 0 11 7"><path d="M0.8 0.8 H10 L5.4 5.8 Z" fill="#6a6a6a"/></svg>
<div class="a" style="left:384.4px;top:311.4px;width:19.8px;height:18.8px;background:linear-gradient(#fbfbfb,#e9e9e9);border:1px solid #b9b9b9"></div>
<svg class="a" style="left:389.4px;top:318.4px;" width="11" height="7" viewBox="0 0 11 7"><path d="M0.8 0.8 H10 L5.4 5.8 Z" fill="#6a6a6a"/></svg>
<div class="a" style="left:461.2px;top:311.4px;width:19.8px;height:18.8px;background:linear-gradient(#fbfbfb,#e9e9e9);border:1px solid #b9b9b9"></div>
<svg class="a" style="left:466.2px;top:318.4px;" width="11" height="7" viewBox="0 0 11 7"><path d="M0.8 0.8 H10 L5.4 5.8 Z" fill="#6a6a6a"/></svg>
<div class="a" style="left:538px;top:311.4px;width:19.8px;height:18.8px;background:linear-gradient(#fbfbfb,#e9e9e9);border:1px solid #b9b9b9"></div>
<svg class="a" style="left:543px;top:318.4px;" width="11" height="7" viewBox="0 0 11 7"><path d="M0.8 0.8 H10 L5.4 5.8 Z" fill="#6a6a6a"/></svg>
<div class="a" style="left:614.8px;top:311.4px;width:19.8px;height:18.8px;background:linear-gradient(#dfe3e8,#d3d8de);border:1px solid #9aa3ad"></div>
<svg class="a" style="left:619.8px;top:318.4px;" width="11" height="7" viewBox="0 0 11 7"><path d="M0.8 0.8 H10 L5.4 5.8 Z" fill="#6a6a6a"/></svg>
<div class="c" style="left:21.2px;top:332.62px;width:77px;height:22.82px">
<span class="t" id="t88" style="left:3.9px;top:3.97px;font-size:16.5px;color:#1c1c1c;transform:scaleX(0.9310);-webkit-text-stroke:0.3px #1c1c1c;">'1008901033817</span>
</div>
<div class="c" style="left:98px;top:332.62px;width:76.3px;height:22.82px">
<span class="t" id="t89" style="left:5.4px;top:5.34px;font-size:13px;color:#1c1c1c;font-weight:bold;font-family:'DejaVu Sans Mono',monospace;transform:scale(0.9439,1.2);-webkit-text-stroke:0px #1c1c1c;">#########</span>
</div>
<div class="c" style="left:174.8px;top:332.62px;width:76.3px;height:22.82px">
<span class="t" id="t90" style="left:5.4px;top:5.34px;font-size:13px;color:#1c1c1c;font-weight:bold;font-family:'DejaVu Sans Mono',monospace;transform:scale(0.9439,1.2);-webkit-text-stroke:0px #1c1c1c;">#########</span>
</div>
<div class="c" style="left:558.8px;top:332.62px;width:120px;height:22.82px">
<span class="t" id="t91" style="left:2.6px;top:3.97px;font-size:16.5px;color:#1c1c1c;transform:scaleX(1.0243);-webkit-text-stroke:0.3px #1c1c1c;">Consumption</span>
</div>
<div class="c" style="left:21.2px;top:355.44px;width:77px;height:22.82px">
<span class="t" id="t92" style="left:3.9px;top:3.97px;font-size:16.5px;color:#1c1c1c;transform:scaleX(0.9310);-webkit-text-stroke:0.3px #1c1c1c;">'1008901033817</span>
</div>
<div class="c" style="left:98px;top:355.44px;width:76.3px;height:22.82px">
<span class="t" id="t93" style="left:5.4px;top:5.34px;font-size:13px;color:#1c1c1c;font-weight:bold;font-family:'DejaVu Sans Mono',monospace;transform:scale(0.9439,1.2);-webkit-text-stroke:0px #1c1c1c;">#########</span>
</div>
<div class="c" style="left:174.8px;top:355.44px;width:76.3px;height:22.82px">
<span class="t" id="t94" style="left:5.4px;top:5.34px;font-size:13px;color:#1c1c1c;font-weight:bold;font-family:'DejaVu Sans Mono',monospace;transform:scale(0.9439,1.2);-webkit-text-stroke:0px #1c1c1c;">#########</span>
</div>
<div class="c" style="left:558.8px;top:355.44px;width:120px;height:22.82px">
<span class="t" id="t95" style="left:2.6px;top:3.97px;font-size:16.5px;color:#1c1c1c;transform:scaleX(1.0243);-webkit-text-stroke:0.3px #1c1c1c;">Consumption</span>
</div>
<div class="c" style="left:21.2px;top:378.26px;width:77px;height:22.82px">
<span class="t" id="t96" style="left:3.9px;top:3.97px;font-size:16.5px;color:#1c1c1c;transform:scaleX(0.9310);-webkit-text-stroke:0.3px #1c1c1c;">'1008901033817</span>
</div>
<div class="c" style="left:98px;top:378.26px;width:76.3px;height:22.82px">
<span class="t" id="t97" style="left:5.4px;top:5.34px;font-size:13px;color:#1c1c1c;font-weight:bold;font-family:'DejaVu Sans Mono',monospace;transform:scale(0.9439,1.2);-webkit-text-stroke:0px #1c1c1c;">#########</span>
</div>
<div class="c" style="left:174.8px;top:378.26px;width:76.3px;height:22.82px">
<span class="t" id="t98" style="left:5.4px;top:5.34px;font-size:13px;color:#1c1c1c;font-weight:bold;font-family:'DejaVu Sans Mono',monospace;transform:scale(0.9439,1.2);-webkit-text-stroke:0px #1c1c1c;">#########</span>
</div>
<div class="c" style="left:558.8px;top:378.26px;width:120px;height:22.82px">
<span class="t" id="t99" style="left:2.6px;top:3.97px;font-size:16.5px;color:#1c1c1c;transform:scaleX(1.0243);-webkit-text-stroke:0.3px #1c1c1c;">Consumption</span>
</div>
<div class="c" style="left:21.2px;top:401.08px;width:77px;height:22.82px">
<span class="t" id="t100" style="left:3.9px;top:3.97px;font-size:16.5px;color:#1c1c1c;transform:scaleX(0.9310);-webkit-text-stroke:0.3px #1c1c1c;">'1008901033817</span>
</div>
<div class="c" style="left:98px;top:401.08px;width:76.3px;height:22.82px">
<span class="t" id="t101" style="left:5.4px;top:5.34px;font-size:13px;color:#1c1c1c;font-weight:bold;font-family:'DejaVu Sans Mono',monospace;transform:scale(0.9439,1.2);-webkit-text-stroke:0px #1c1c1c;">#########</span>
</div>
<div class="c" style="left:174.8px;top:401.08px;width:76.3px;height:22.82px">
<span class="t" id="t102" style="left:5.4px;top:5.34px;font-size:13px;color:#1c1c1c;font-weight:bold;font-family:'DejaVu Sans Mono',monospace;transform:scale(0.9439,1.2);-webkit-text-stroke:0px #1c1c1c;">#########</span>
</div>
<div class="c" style="left:558.8px;top:401.08px;width:120px;height:22.82px">
<span class="t" id="t103" style="left:2.6px;top:3.97px;font-size:16.5px;color:#1c1c1c;transform:scaleX(1.0243);-webkit-text-stroke:0.3px #1c1c1c;">Consumption</span>
</div>
<div class="c" style="left:21.2px;top:423.9px;width:77px;height:22.82px">
<span class="t" id="t104" style="left:3.9px;top:3.97px;font-size:16.5px;color:#1c1c1c;transform:scaleX(0.9310);-webkit-text-stroke:0.3px #1c1c1c;">'1008901033817</span>
</div>
<div class="c" style="left:98px;top:423.9px;width:76.3px;height:22.82px">
<span class="t" id="t105" style="left:5.4px;top:5.34px;font-size:13px;color:#1c1c1c;font-weight:bold;font-family:'DejaVu Sans Mono',monospace;transform:scale(0.9439,1.2);-webkit-text-stroke:0px #1c1c1c;">#########</span>
</div>
<div class="c" style="left:174.8px;top:423.9px;width:76.3px;height:22.82px">
<span class="t" id="t106" style="left:5.4px;top:5.34px;font-size:13px;color:#1c1c1c;font-weight:bold;font-family:'DejaVu Sans Mono',monospace;transform:scale(0.9439,1.2);-webkit-text-stroke:0px #1c1c1c;">#########</span>
</div>
<div class="c" style="left:558.8px;top:423.9px;width:120px;height:22.82px">
<span class="t" id="t107" style="left:2.6px;top:3.97px;font-size:16.5px;color:#1c1c1c;transform:scaleX(1.0243);-webkit-text-stroke:0.3px #1c1c1c;">Consumption</span>
</div>
<div class="c" style="left:21.2px;top:446.72px;width:77px;height:22.82px">
<span class="t" id="t108" style="left:3.9px;top:3.97px;font-size:16.5px;color:#1c1c1c;transform:scaleX(0.9310);-webkit-text-stroke:0.3px #1c1c1c;">'1008901033817</span>
</div>
<div class="c" style="left:98px;top:446.72px;width:76.3px;height:22.82px">
<span class="t" id="t109" style="left:5.4px;top:5.34px;font-size:13px;color:#1c1c1c;font-weight:bold;font-family:'DejaVu Sans Mono',monospace;transform:scale(0.9439,1.2);-webkit-text-stroke:0px #1c1c1c;">#########</span>
</div>
<div class="c" style="left:174.8px;top:446.72px;width:76.3px;height:22.82px">
<span class="t" id="t110" style="left:5.4px;top:5.34px;font-size:13px;color:#1c1c1c;font-weight:bold;font-family:'DejaVu Sans Mono',monospace;transform:scale(0.9439,1.2);-webkit-text-stroke:0px #1c1c1c;">#########</span>
</div>
<div class="c" style="left:558.8px;top:446.72px;width:120px;height:22.82px">
<span class="t" id="t111" style="left:2.6px;top:3.97px;font-size:16.5px;color:#1c1c1c;transform:scaleX(1.0243);-webkit-text-stroke:0.3px #1c1c1c;">Consumption</span>
</div>
<div class="c" style="left:21.2px;top:469.54px;width:77px;height:22.82px">
<span class="t" id="t112" style="left:3.9px;top:3.97px;font-size:16.5px;color:#1c1c1c;transform:scaleX(0.9310);-webkit-text-stroke:0.3px #1c1c1c;">'1008901033817</span>
</div>
<div class="c" style="left:98px;top:469.54px;width:76.3px;height:22.82px">
<span class="t" id="t113" style="left:5.4px;top:5.34px;font-size:13px;color:#1c1c1c;font-weight:bold;font-family:'DejaVu Sans Mono',monospace;transform:scale(0.9439,1.2);-webkit-text-stroke:0px #1c1c1c;">#########</span>
</div>
<div class="c" style="left:174.8px;top:469.54px;width:76.3px;height:22.82px">
<span class="t" id="t114" style="left:5.4px;top:5.34px;font-size:13px;color:#1c1c1c;font-weight:bold;font-family:'DejaVu Sans Mono',monospace;transform:scale(0.9439,1.2);-webkit-text-stroke:0px #1c1c1c;">#########</span>
</div>
<div class="c" style="left:558.8px;top:469.54px;width:120px;height:22.82px">
<span class="t" id="t115" style="left:2.6px;top:3.97px;font-size:16.5px;color:#1c1c1c;transform:scaleX(1.0243);-webkit-text-stroke:0.3px #1c1c1c;">Consumption</span>
</div>
<div class="c" style="left:21.2px;top:492.36px;width:77px;height:22.82px">
<span class="t" id="t116" style="left:3.9px;top:3.97px;font-size:16.5px;color:#1c1c1c;transform:scaleX(0.9310);-webkit-text-stroke:0.3px #1c1c1c;">'1008901033817</span>
</div>
<div class="c" style="left:98px;top:492.36px;width:76.3px;height:22.82px">
<span class="t" id="t117" style="left:5.4px;top:5.34px;font-size:13px;color:#1c1c1c;font-weight:bold;font-family:'DejaVu Sans Mono',monospace;transform:scale(0.9439,1.2);-webkit-text-stroke:0px #1c1c1c;">#########</span>
</div>
<div class="c" style="left:174.8px;top:492.36px;width:76.3px;height:22.82px">
<span class="t" id="t118" style="left:5.4px;top:5.34px;font-size:13px;color:#1c1c1c;font-weight:bold;font-family:'DejaVu Sans Mono',monospace;transform:scale(0.9439,1.2);-webkit-text-stroke:0px #1c1c1c;">#########</span>
</div>
<div class="c" style="left:558.8px;top:492.36px;width:120px;height:22.82px">
<span class="t" id="t119" style="left:2.6px;top:3.97px;font-size:16.5px;color:#1c1c1c;transform:scaleX(1.0243);-webkit-text-stroke:0.3px #1c1c1c;">Consumption</span>
</div>
<div class="c" style="left:21.2px;top:515.18px;width:77px;height:22.82px">
<span class="t" id="t120" style="left:3.9px;top:3.97px;font-size:16.5px;color:#1c1c1c;transform:scaleX(0.9310);-webkit-text-stroke:0.3px #1c1c1c;">'1008901033817</span>
</div>
<div class="c" style="left:98px;top:515.18px;width:76.3px;height:22.82px">
<span class="t" id="t121" style="left:5.4px;top:5.34px;font-size:13px;color:#1c1c1c;font-weight:bold;font-family:'DejaVu Sans Mono',monospace;transform:scale(0.9439,1.2);-webkit-text-stroke:0px #1c1c1c;">#########</span>
</div>
<div class="c" style="left:174.8px;top:515.18px;width:76.3px;height:22.82px">
<span class="t" id="t122" style="left:5.4px;top:5.34px;font-size:13px;color:#1c1c1c;font-weight:bold;font-family:'DejaVu Sans Mono',monospace;transform:scale(0.9439,1.2);-webkit-text-stroke:0px #1c1c1c;">#########</span>
</div>
<div class="c" style="left:558.8px;top:515.18px;width:120px;height:22.82px">
<span class="t" id="t123" style="left:2.6px;top:3.97px;font-size:16.5px;color:#1c1c1c;transform:scaleX(1.0243);-webkit-text-stroke:0.3px #1c1c1c;">Consumption</span>
</div>
<div class="c" style="left:21.2px;top:538px;width:77px;height:22.82px">
<span class="t" id="t124" style="left:3.9px;top:3.97px;font-size:16.5px;color:#1c1c1c;transform:scaleX(0.9310);-webkit-text-stroke:0.3px #1c1c1c;">'1008901033817</span>
</div>
<div class="c" style="left:98px;top:538px;width:76.3px;height:22.82px">
<span class="t" id="t125" style="left:5.4px;top:5.34px;font-size:13px;color:#1c1c1c;font-weight:bold;font-family:'DejaVu Sans Mono',monospace;transform:scale(0.9439,1.2);-webkit-text-stroke:0px #1c1c1c;">#########</span>
</div>
<div class="c" style="left:174.8px;top:538px;width:76.3px;height:22.82px">
<span class="t" id="t126" style="left:5.4px;top:5.34px;font-size:13px;color:#1c1c1c;font-weight:bold;font-family:'DejaVu Sans Mono',monospace;transform:scale(0.9439,1.2);-webkit-text-stroke:0px #1c1c1c;">#########</span>
</div>
<div class="c" style="left:558.8px;top:538px;width:120px;height:22.82px">
<span class="t" id="t127" style="left:2.6px;top:3.97px;font-size:16.5px;color:#1c1c1c;transform:scaleX(1.0243);-webkit-text-stroke:0.3px #1c1c1c;">Consumption</span>
</div>
<div class="c" style="left:21.2px;top:560.82px;width:77px;height:22.82px">
<span class="t" id="t128" style="left:3.9px;top:3.97px;font-size:16.5px;color:#1c1c1c;transform:scaleX(0.9310);-webkit-text-stroke:0.3px #1c1c1c;">'1008901033817</span>
</div>
<div class="c" style="left:98px;top:560.82px;width:76.3px;height:22.82px">
<span class="t" id="t129" style="left:5.4px;top:5.34px;font-size:13px;color:#1c1c1c;font-weight:bold;font-family:'DejaVu Sans Mono',monospace;transform:scale(0.9439,1.2);-webkit-text-stroke:0px #1c1c1c;">#########</span>
</div>
<div class="c" style="left:174.8px;top:560.82px;width:76.3px;height:22.82px">
<span class="t" id="t130" style="left:5.4px;top:5.34px;font-size:13px;color:#1c1c1c;font-weight:bold;font-family:'DejaVu Sans Mono',monospace;transform:scale(0.9439,1.2);-webkit-text-stroke:0px #1c1c1c;">#########</span>
</div>
<div class="c" style="left:558.8px;top:560.82px;width:120px;height:22.82px">
<span class="t" id="t131" style="left:2.6px;top:3.97px;font-size:16.5px;color:#1c1c1c;transform:scaleX(1.0243);-webkit-text-stroke:0.3px #1c1c1c;">Consumption</span>
</div>
<div class="c" style="left:21.2px;top:583.64px;width:77px;height:22.82px">
<span class="t" id="t132" style="left:3.9px;top:3.97px;font-size:16.5px;color:#1c1c1c;transform:scaleX(0.9310);-webkit-text-stroke:0.3px #1c1c1c;">'1008901033817</span>
</div>
<div class="c" style="left:98px;top:583.64px;width:76.3px;height:22.82px">
<span class="t" id="t133" style="left:5.4px;top:5.34px;font-size:13px;color:#1c1c1c;font-weight:bold;font-family:'DejaVu Sans Mono',monospace;transform:scale(0.9439,1.2);-webkit-text-stroke:0px #1c1c1c;">#########</span>
</div>
<div class="c" style="left:174.8px;top:583.64px;width:76.3px;height:22.82px">
<span class="t" id="t134" style="left:5.4px;top:5.34px;font-size:13px;color:#1c1c1c;font-weight:bold;font-family:'DejaVu Sans Mono',monospace;transform:scale(0.9439,1.2);-webkit-text-stroke:0px #1c1c1c;">#########</span>
</div>
<div class="c" style="left:558.8px;top:583.64px;width:120px;height:22.82px">
<span class="t" id="t135" style="left:2.6px;top:3.97px;font-size:16.5px;color:#1c1c1c;transform:scaleX(1.0243);-webkit-text-stroke:0.3px #1c1c1c;">Consumption</span>
</div>
<div class="c" style="left:21.2px;top:606.46px;width:77px;height:22.82px">
<span class="t" id="t136" style="left:3.9px;top:3.97px;font-size:16.5px;color:#1c1c1c;transform:scaleX(0.9310);-webkit-text-stroke:0.3px #1c1c1c;">'1008901033817</span>
</div>
<div class="c" style="left:98px;top:606.46px;width:76.3px;height:22.82px">
<span class="t" id="t137" style="left:5.4px;top:5.34px;font-size:13px;color:#1c1c1c;font-weight:bold;font-family:'DejaVu Sans Mono',monospace;transform:scale(0.9439,1.2);-webkit-text-stroke:0px #1c1c1c;">#########</span>
</div>
<div class="c" style="left:174.8px;top:606.46px;width:76.3px;height:22.82px">
<span class="t" id="t138" style="left:5.4px;top:5.34px;font-size:13px;color:#1c1c1c;font-weight:bold;font-family:'DejaVu Sans Mono',monospace;transform:scale(0.9439,1.2);-webkit-text-stroke:0px #1c1c1c;">#########</span>
</div>
<div class="c" style="left:558.8px;top:606.46px;width:120px;height:22.82px">
<span class="t" id="t139" style="left:2.6px;top:3.97px;font-size:16.5px;color:#1c1c1c;transform:scaleX(1.0243);-webkit-text-stroke:0.3px #1c1c1c;">Consumption</span>
</div>
<div class="c" style="left:21.2px;top:629.28px;width:77px;height:22.82px">
<span class="t" id="t140" style="left:3.9px;top:3.97px;font-size:16.5px;color:#1c1c1c;transform:scaleX(0.9310);-webkit-text-stroke:0.3px #1c1c1c;">'1008901033817</span>
</div>
<div class="c" style="left:98px;top:629.28px;width:76.3px;height:22.82px">
<span class="t" id="t141" style="left:5.4px;top:5.34px;font-size:13px;color:#1c1c1c;font-weight:bold;font-family:'DejaVu Sans Mono',monospace;transform:scale(0.9439,1.2);-webkit-text-stroke:0px #1c1c1c;">#########</span>
</div>
<div class="c" style="left:174.8px;top:629.28px;width:76.3px;height:22.82px">
<span class="t" id="t142" style="left:5.4px;top:5.34px;font-size:13px;color:#1c1c1c;font-weight:bold;font-family:'DejaVu Sans Mono',monospace;transform:scale(0.9439,1.2);-webkit-text-stroke:0px #1c1c1c;">#########</span>
</div>
<div class="c" style="left:558.8px;top:629.28px;width:120px;height:22.82px">
<span class="t" id="t143" style="left:2.6px;top:3.97px;font-size:16.5px;color:#1c1c1c;transform:scaleX(1.0243);-webkit-text-stroke:0.3px #1c1c1c;">Consumption</span>
</div>
<div class="c" style="left:21.2px;top:652.1px;width:77px;height:22.82px">
<span class="t" id="t144" style="left:3.9px;top:3.97px;font-size:16.5px;color:#1c1c1c;transform:scaleX(0.9310);-webkit-text-stroke:0.3px #1c1c1c;">'1008901033817</span>
</div>
<div class="c" style="left:98px;top:652.1px;width:76.3px;height:22.82px">
<span class="t" id="t145" style="left:5.4px;top:5.34px;font-size:13px;color:#1c1c1c;font-weight:bold;font-family:'DejaVu Sans Mono',monospace;transform:scale(0.9439,1.2);-webkit-text-stroke:0px #1c1c1c;">#########</span>
</div>
<div class="c" style="left:174.8px;top:652.1px;width:76.3px;height:22.82px">
<span class="t" id="t146" style="left:5.4px;top:5.34px;font-size:13px;color:#1c1c1c;font-weight:bold;font-family:'DejaVu Sans Mono',monospace;transform:scale(0.9439,1.2);-webkit-text-stroke:0px #1c1c1c;">#########</span>
</div>
<div class="c" style="left:558.8px;top:652.1px;width:120px;height:22.82px">
<span class="t" id="t147" style="left:2.6px;top:3.97px;font-size:16.5px;color:#1c1c1c;transform:scaleX(1.0243);-webkit-text-stroke:0.3px #1c1c1c;">Consumption</span>
</div>
<div class="c" style="left:21.2px;top:674.92px;width:77px;height:22.82px">
<span class="t" id="t148" style="left:3.9px;top:3.97px;font-size:16.5px;color:#1c1c1c;transform:scaleX(0.9310);-webkit-text-stroke:0.3px #1c1c1c;">'1008901033817</span>
</div>
<div class="c" style="left:98px;top:674.92px;width:76.3px;height:22.82px">
<span class="t" id="t149" style="left:5.4px;top:5.34px;font-size:13px;color:#1c1c1c;font-weight:bold;font-family:'DejaVu Sans Mono',monospace;transform:scale(0.9439,1.2);-webkit-text-stroke:0px #1c1c1c;">#########</span>
</div>
<div class="c" style="left:174.8px;top:674.92px;width:76.3px;height:22.82px">
<span class="t" id="t150" style="left:5.4px;top:5.34px;font-size:13px;color:#1c1c1c;font-weight:bold;font-family:'DejaVu Sans Mono',monospace;transform:scale(0.9439,1.2);-webkit-text-stroke:0px #1c1c1c;">#########</span>
</div>
<div class="c" style="left:558.8px;top:674.92px;width:120px;height:22.82px">
<span class="t" id="t151" style="left:2.6px;top:3.97px;font-size:16.5px;color:#1c1c1c;transform:scaleX(1.0243);-webkit-text-stroke:0.3px #1c1c1c;">Consumption</span>
</div>
<div class="c" style="left:21.2px;top:697.74px;width:77px;height:22.82px">
<span class="t" id="t152" style="left:3.9px;top:3.97px;font-size:16.5px;color:#1c1c1c;transform:scaleX(0.9310);-webkit-text-stroke:0.3px #1c1c1c;">'1008901033817</span>
</div>
<div class="c" style="left:98px;top:697.74px;width:76.3px;height:22.82px">
<span class="t" id="t153" style="left:5.4px;top:5.34px;font-size:13px;color:#1c1c1c;font-weight:bold;font-family:'DejaVu Sans Mono',monospace;transform:scale(0.9439,1.2);-webkit-text-stroke:0px #1c1c1c;">#########</span>
</div>
<div class="c" style="left:174.8px;top:697.74px;width:76.3px;height:22.82px">
<span class="t" id="t154" style="left:5.4px;top:5.34px;font-size:13px;color:#1c1c1c;font-weight:bold;font-family:'DejaVu Sans Mono',monospace;transform:scale(0.9439,1.2);-webkit-text-stroke:0px #1c1c1c;">#########</span>
</div>
<div class="c" style="left:558.8px;top:697.74px;width:120px;height:22.82px">
<span class="t" id="t155" style="left:2.6px;top:3.97px;font-size:16.5px;color:#1c1c1c;transform:scaleX(1.0243);-webkit-text-stroke:0.3px #1c1c1c;">Consumption</span>
</div>
<div class="c" style="left:21.2px;top:720.56px;width:77px;height:22.82px">
<span class="t" id="t156" style="left:3.9px;top:3.97px;font-size:16.5px;color:#1c1c1c;transform:scaleX(0.9310);-webkit-text-stroke:0.3px #1c1c1c;">'1008901033817</span>
</div>
<div class="c" style="left:98px;top:720.56px;width:76.3px;height:22.82px">
<span class="t" id="t157" style="left:5.4px;top:5.34px;font-size:13px;color:#1c1c1c;font-weight:bold;font-family:'DejaVu Sans Mono',monospace;transform:scale(0.9439,1.2);-webkit-text-stroke:0px #1c1c1c;">#########</span>
</div>
<div class="c" style="left:174.8px;top:720.56px;width:76.3px;height:22.82px">
<span class="t" id="t158" style="left:5.4px;top:5.34px;font-size:13px;color:#1c1c1c;font-weight:bold;font-family:'DejaVu Sans Mono',monospace;transform:scale(0.9439,1.2);-webkit-text-stroke:0px #1c1c1c;">#########</span>
</div>
<div class="c" style="left:558.8px;top:720.56px;width:120px;height:22.82px">
<span class="t" id="t159" style="left:2.6px;top:3.97px;font-size:16.5px;color:#1c1c1c;transform:scaleX(1.0243);-webkit-text-stroke:0.3px #1c1c1c;">Consumption</span>
</div>
<div class="c" style="left:21.2px;top:743.38px;width:77px;height:22.82px">
<span class="t" id="t160" style="left:3.9px;top:3.97px;font-size:16.5px;color:#1c1c1c;transform:scaleX(0.9310);-webkit-text-stroke:0.3px #1c1c1c;">'1008901033817</span>
</div>
<div class="c" style="left:98px;top:743.38px;width:76.3px;height:22.82px">
<span class="t" id="t161" style="left:5.4px;top:5.34px;font-size:13px;color:#1c1c1c;font-weight:bold;font-family:'DejaVu Sans Mono',monospace;transform:scale(0.9439,1.2);-webkit-text-stroke:0px #1c1c1c;">#########</span>
</div>
<div class="c" style="left:174.8px;top:743.38px;width:76.3px;height:22.82px">
<span class="t" id="t162" style="left:5.4px;top:5.34px;font-size:13px;color:#1c1c1c;font-weight:bold;font-family:'DejaVu Sans Mono',monospace;transform:scale(0.9439,1.2);-webkit-text-stroke:0px #1c1c1c;">#########</span>
</div>
<div class="c" style="left:558.8px;top:743.38px;width:120px;height:22.82px">
<span class="t" id="t163" style="left:2.6px;top:3.97px;font-size:16.5px;color:#1c1c1c;transform:scaleX(1.0243);-webkit-text-stroke:0.3px #1c1c1c;">Consumption</span>
</div>
<div class="c" style="left:21.2px;top:766.2px;width:77px;height:22.82px">
<span class="t" id="t164" style="left:3.9px;top:3.97px;font-size:16.5px;color:#1c1c1c;transform:scaleX(0.9310);-webkit-text-stroke:0.3px #1c1c1c;">'1008901033817</span>
</div>
<div class="c" style="left:98px;top:766.2px;width:76.3px;height:22.82px">
<span class="t" id="t165" style="left:5.4px;top:5.34px;font-size:13px;color:#1c1c1c;font-weight:bold;font-family:'DejaVu Sans Mono',monospace;transform:scale(0.9439,1.2);-webkit-text-stroke:0px #1c1c1c;">#########</span>
</div>
<div class="c" style="left:174.8px;top:766.2px;width:76.3px;height:22.82px">
<span class="t" id="t166" style="left:5.4px;top:5.34px;font-size:13px;color:#1c1c1c;font-weight:bold;font-family:'DejaVu Sans Mono',monospace;transform:scale(0.9439,1.2);-webkit-text-stroke:0px #1c1c1c;">#########</span>
</div>
<div class="c" style="left:558.8px;top:766.2px;width:120px;height:22.82px">
<span class="t" id="t167" style="left:2.6px;top:3.97px;font-size:16.5px;color:#1c1c1c;transform:scaleX(1.0243);-webkit-text-stroke:0.3px #1c1c1c;">Consumption</span>
</div>
<div class="c" style="left:21.2px;top:789.02px;width:77px;height:22.82px">
<span class="t" id="t168" style="left:3.9px;top:3.97px;font-size:16.5px;color:#1c1c1c;transform:scaleX(0.9310);-webkit-text-stroke:0.3px #1c1c1c;">'1008901033817</span>
</div>
<div class="c" style="left:98px;top:789.02px;width:76.3px;height:22.82px">
<span class="t" id="t169" style="left:5.4px;top:5.34px;font-size:13px;color:#1c1c1c;font-weight:bold;font-family:'DejaVu Sans Mono',monospace;transform:scale(0.9439,1.2);-webkit-text-stroke:0px #1c1c1c;">#########</span>
</div>
<div class="c" style="left:174.8px;top:789.02px;width:76.3px;height:22.82px">
<span class="t" id="t170" style="left:5.4px;top:5.34px;font-size:13px;color:#1c1c1c;font-weight:bold;font-family:'DejaVu Sans Mono',monospace;transform:scale(0.9439,1.2);-webkit-text-stroke:0px #1c1c1c;">#########</span>
</div>
<div class="c" style="left:558.8px;top:789.02px;width:120px;height:22.82px">
<span class="t" id="t171" style="left:2.6px;top:3.97px;font-size:16.5px;color:#1c1c1c;transform:scaleX(1.0243);-webkit-text-stroke:0.3px #1c1c1c;">Consumption</span>
</div>
<div class="c" style="left:21.2px;top:811.84px;width:77px;height:22.82px">
<span class="t" id="t172" style="left:3.9px;top:3.97px;font-size:16.5px;color:#1c1c1c;transform:scaleX(0.9310);-webkit-text-stroke:0.3px #1c1c1c;">'1008901033817</span>
</div>
<div class="c" style="left:98px;top:811.84px;width:76.3px;height:22.82px">
<span class="t" id="t173" style="left:5.4px;top:5.34px;font-size:13px;color:#1c1c1c;font-weight:bold;font-family:'DejaVu Sans Mono',monospace;transform:scale(0.9439,1.2);-webkit-text-stroke:0px #1c1c1c;">#########</span>
</div>
<div class="c" style="left:174.8px;top:811.84px;width:76.3px;height:22.82px">
<span class="t" id="t174" style="left:5.4px;top:5.34px;font-size:13px;color:#1c1c1c;font-weight:bold;font-family:'DejaVu Sans Mono',monospace;transform:scale(0.9439,1.2);-webkit-text-stroke:0px #1c1c1c;">#########</span>
</div>
<div class="c" style="left:558.8px;top:811.84px;width:120px;height:22.82px">
<span class="t" id="t175" style="left:2.6px;top:3.97px;font-size:16.5px;color:#1c1c1c;transform:scaleX(1.0243);-webkit-text-stroke:0.3px #1c1c1c;">Consumption</span>
</div>
<div class="c" style="left:21.2px;top:834.66px;width:77px;height:22.82px">
<span class="t" id="t176" style="left:3.9px;top:3.97px;font-size:16.5px;color:#1c1c1c;transform:scaleX(0.9310);-webkit-text-stroke:0.3px #1c1c1c;">'1008901033817</span>
</div>
<div class="c" style="left:98px;top:834.66px;width:76.3px;height:22.82px">
<span class="t" id="t177" style="left:5.4px;top:5.34px;font-size:13px;color:#1c1c1c;font-weight:bold;font-family:'DejaVu Sans Mono',monospace;transform:scale(0.9439,1.2);-webkit-text-stroke:0px #1c1c1c;">#########</span>
</div>
<div class="c" style="left:174.8px;top:834.66px;width:76.3px;height:22.82px">
<span class="t" id="t178" style="left:5.4px;top:5.34px;font-size:13px;color:#1c1c1c;font-weight:bold;font-family:'DejaVu Sans Mono',monospace;transform:scale(0.9439,1.2);-webkit-text-stroke:0px #1c1c1c;">#########</span>
</div>
<div class="c" style="left:558.8px;top:834.66px;width:120px;height:22.82px">
<span class="t" id="t179" style="left:2.6px;top:3.97px;font-size:16.5px;color:#1c1c1c;transform:scaleX(1.0243);-webkit-text-stroke:0.3px #1c1c1c;">Consumption</span>
</div>
<div class="c" style="left:21.2px;top:857.48px;width:77px;height:22.82px">
<span class="t" id="t180" style="left:3.9px;top:3.97px;font-size:16.5px;color:#1c1c1c;transform:scaleX(0.9310);-webkit-text-stroke:0.3px #1c1c1c;">'1008901033817</span>
</div>
<div class="c" style="left:98px;top:857.48px;width:76.3px;height:22.82px">
<span class="t" id="t181" style="left:5.4px;top:5.34px;font-size:13px;color:#1c1c1c;font-weight:bold;font-family:'DejaVu Sans Mono',monospace;transform:scale(0.9439,1.2);-webkit-text-stroke:0px #1c1c1c;">#########</span>
</div>
<div class="c" style="left:174.8px;top:857.48px;width:76.3px;height:22.82px">
<span class="t" id="t182" style="left:5.4px;top:5.34px;font-size:13px;color:#1c1c1c;font-weight:bold;font-family:'DejaVu Sans Mono',monospace;transform:scale(0.9439,1.2);-webkit-text-stroke:0px #1c1c1c;">#########</span>
</div>
<div class="c" style="left:558.8px;top:857.48px;width:120px;height:22.82px">
<span class="t" id="t183" style="left:2.6px;top:3.97px;font-size:16.5px;color:#1c1c1c;transform:scaleX(1.0243);-webkit-text-stroke:0.3px #1c1c1c;">Consumption</span>
</div>
<div class="c" style="left:21.2px;top:880.3px;width:77px;height:22.82px">
<span class="t" id="t184" style="left:3.9px;top:3.97px;font-size:16.5px;color:#1c1c1c;transform:scaleX(0.9310);-webkit-text-stroke:0.3px #1c1c1c;">'1008901033817</span>
</div>
<div class="c" style="left:98px;top:880.3px;width:76.3px;height:22.82px">
<span class="t" id="t185" style="left:5.4px;top:5.34px;font-size:13px;color:#1c1c1c;font-weight:bold;font-family:'DejaVu Sans Mono',monospace;transform:scale(0.9439,1.2);-webkit-text-stroke:0px #1c1c1c;">#########</span>
</div>
<div class="c" style="left:174.8px;top:880.3px;width:76.3px;height:22.82px">
<span class="t" id="t186" style="left:5.4px;top:5.34px;font-size:13px;color:#1c1c1c;font-weight:bold;font-family:'DejaVu Sans Mono',monospace;transform:scale(0.9439,1.2);-webkit-text-stroke:0px #1c1c1c;">#########</span>
</div>
<div class="c" style="left:558.8px;top:880.3px;width:120px;height:22.82px">
<span class="t" id="t187" style="left:2.6px;top:3.97px;font-size:16.5px;color:#1c1c1c;transform:scaleX(1.0243);-webkit-text-stroke:0.3px #1c1c1c;">Consumption</span>
</div>
<div class="c" style="left:21.2px;top:903.12px;width:77px;height:22.82px">
<span class="t" id="t188" style="left:3.9px;top:3.97px;font-size:16.5px;color:#1c1c1c;transform:scaleX(0.9310);-webkit-text-stroke:0.3px #1c1c1c;">'1008901033817</span>
</div>
<div class="c" style="left:98px;top:903.12px;width:76.3px;height:22.82px">
<span class="t" id="t189" style="left:5.4px;top:5.34px;font-size:13px;color:#1c1c1c;font-weight:bold;font-family:'DejaVu Sans Mono',monospace;transform:scale(0.9439,1.2);-webkit-text-stroke:0px #1c1c1c;">#########</span>
</div>
<div class="c" style="left:174.8px;top:903.12px;width:76.3px;height:22.82px">
<span class="t" id="t190" style="left:5.4px;top:5.34px;font-size:13px;color:#1c1c1c;font-weight:bold;font-family:'DejaVu Sans Mono',monospace;transform:scale(0.9439,1.2);-webkit-text-stroke:0px #1c1c1c;">#########</span>
</div>
<div class="c" style="left:558.8px;top:903.12px;width:120px;height:22.82px">
<span class="t" id="t191" style="left:2.6px;top:3.97px;font-size:16.5px;color:#1c1c1c;transform:scaleX(1.0243);-webkit-text-stroke:0.3px #1c1c1c;">Consumption</span>
</div>
<div class="c" style="left:21.2px;top:925.94px;width:77px;height:22.82px">
<span class="t" id="t192" style="left:3.9px;top:3.97px;font-size:16.5px;color:#1c1c1c;transform:scaleX(0.9310);-webkit-text-stroke:0.3px #1c1c1c;">'1008901033817</span>
</div>
<div class="c" style="left:98px;top:925.94px;width:76.3px;height:22.82px">
<span class="t" id="t193" style="left:5.4px;top:5.34px;font-size:13px;color:#1c1c1c;font-weight:bold;font-family:'DejaVu Sans Mono',monospace;transform:scale(0.9439,1.2);-webkit-text-stroke:0px #1c1c1c;">#########</span>
</div>
<div class="c" style="left:174.8px;top:925.94px;width:76.3px;height:22.82px">
<span class="t" id="t194" style="left:5.4px;top:5.34px;font-size:13px;color:#1c1c1c;font-weight:bold;font-family:'DejaVu Sans Mono',monospace;transform:scale(0.9439,1.2);-webkit-text-stroke:0px #1c1c1c;">#########</span>
</div>
<div class="c" style="left:558.8px;top:925.94px;width:120px;height:22.82px">
<span class="t" id="t195" style="left:2.6px;top:3.97px;font-size:16.5px;color:#1c1c1c;transform:scaleX(1.0243);-webkit-text-stroke:0.3px #1c1c1c;">Consumption</span>
</div>
<div class="c" style="left:21.2px;top:948.76px;width:77px;height:22.82px">
<span class="t" id="t196" style="left:3.9px;top:3.97px;font-size:16.5px;color:#1c1c1c;transform:scaleX(0.9310);-webkit-text-stroke:0.3px #1c1c1c;">'1008901033817</span>
</div>
<div class="c" style="left:98px;top:948.76px;width:76.3px;height:22.82px">
<span class="t" id="t197" style="left:5.4px;top:5.34px;font-size:13px;color:#1c1c1c;font-weight:bold;font-family:'DejaVu Sans Mono',monospace;transform:scale(0.9439,1.2);-webkit-text-stroke:0px #1c1c1c;">#########</span>
</div>
<div class="c" style="left:174.8px;top:948.76px;width:76.3px;height:22.82px">
<span class="t" id="t198" style="left:5.4px;top:5.34px;font-size:13px;color:#1c1c1c;font-weight:bold;font-family:'DejaVu Sans Mono',monospace;transform:scale(0.9439,1.2);-webkit-text-stroke:0px #1c1c1c;">#########</span>
</div>
<div class="c" style="left:558.8px;top:948.76px;width:120px;height:22.82px">
<span class="t" id="t199" style="left:2.6px;top:3.97px;font-size:16.5px;color:#1c1c1c;transform:scaleX(1.0243);-webkit-text-stroke:0.3px #1c1c1c;">Consumption</span>
</div>
<div class="c" style="left:251.6px;top:948.76px;width:76.3px;height:22.82px">
<span class="t" id="t200" style="left:44.4px;top:3.97px;font-size:16.5px;color:#1c1c1c;transform:scaleX(0.8965);-webkit-text-stroke:0.3px #1c1c1c;">6:45</span>
</div>
<div class="c" style="left:328.4px;top:948.76px;width:76.3px;height:22.82px">
<span class="t" id="t201" style="left:44.4px;top:3.97px;font-size:16.5px;color:#1c1c1c;transform:scaleX(0.8965);-webkit-text-stroke:0.3px #1c1c1c;">7:00</span>
</div>
<div class="c" style="left:405.2px;top:948.76px;width:76.3px;height:22.82px">
<span class="t" id="t202" style="left:44.4px;top:3.97px;font-size:16.5px;color:#1c1c1c;transform:scaleX(0.8965);-webkit-text-stroke:0.3px #1c1c1c;">0.16</span>
</div>
<div class="c" style="left:482px;top:948.76px;width:76.3px;height:22.82px">
<span class="t" id="t203" style="left:3.4px;top:3.97px;font-size:16.5px;color:#1c1c1c;transform:scaleX(0.8533);-webkit-text-stroke:0.3px #1c1c1c;">A</span>
</div>
<div class="a" style="left:19.4px;top:307.9px;width:80.3px;height:26.52px;border:2px solid #217346"></div>
<div class="a" style="left:94.8px;top:329.62px;width:7.4px;height:7.2px;background:#217346;border:1px solid #fff;"></div>
<div class="a" style="left:280.8px;top:331.8px;width:353.8px;height:625.2px;background:#fff;border:1px solid #d0d0d0;box-shadow:1px 2px 4px rgba(0,0,0,.16)"></div>
<svg class="a" style="left:294.4px;top:338px;" width="24" height="22" viewBox="0 0 24 22"><text x="2" y="9" font-family="Liberation Sans, sans-serif" font-size="11" font-weight="bold" fill="#3590dc">A</text><text x="2" y="19.4" font-family="Liberation Sans, sans-serif" font-size="11" font-weight="bold" fill="#333">Z</text>
<path d="M17.4 2 V19 M13.6 15.4 L17.4 19.4 L21.2 15.4" fill="none" stroke="#444" stroke-width="1.4"/></svg>
<svg class="a" style="left:294.4px;top:371px;" width="24" height="22" viewBox="0 0 24 22"><text x="2" y="9" font-family="Liberation Sans, sans-serif" font-size="11" font-weight="bold" fill="#333">Z</text><text x="2" y="19.4" font-family="Liberation Sans, sans-serif" font-size="11" font-weight="bold" fill="#3590dc">A</text>
<path d="M17.4 2 V19 M13.6 15.4 L17.4 19.4 L21.2 15.4" fill="none" stroke="#444" stroke-width="1.4"/></svg>
<span class="t" id="t204" style="left:327px;top:341.85px;font-size:14.3px;color:#262626;transform:scaleX(1.0035);"><span style="text-decoration:underline">S</span>ort A to Z</span>
<span class="t" id="t205" style="left:327px;top:375.04px;font-size:14.3px;color:#262626;transform:scaleX(0.9917);">S<span style="text-decoration:underline">o</span>rt Z to A</span>
<span class="t" id="t206" style="left:317.5px;top:406.85px;font-size:14.3px;color:#262626;transform:scaleX(0.9826);">Sor<span style="text-decoration:underline">t</span> by Color</span>
<div class="a" style="left:320px;top:429.5px;width:312.5px;height:1px;background:#e1e1e1;"></div>
<span class="t" id="t207" style="left:317.5px;top:438.85px;font-size:14.3px;color:#a3a3a3;transform:scaleX(0.9365);">Sheet <span style="text-decoration:underline">V</span>iew</span>
<div class="a" style="left:320px;top:462px;width:312.5px;height:1px;background:#e1e1e1;"></div>
<span class="t" id="t208" style="left:327px;top:473.85px;font-size:14.3px;color:#a3a3a3;transform:scaleX(0.9421);"><span style="text-decoration:underline">C</span>lear Filter From "CONSUMPTION_SURPL..."</span>
<span class="t" id="t209" style="left:317.5px;top:505.35px;font-size:14.3px;color:#a3a3a3;transform:scaleX(0.9831);">F<span style="text-decoration:underline">i</span>lter by Color</span>
<span class="t" id="t210" style="left:317.5px;top:533.85px;font-size:14.3px;color:#262626;transform:scaleX(0.9620);">Text <span style="text-decoration:underline">F</span>ilters</span>
<div class="a" style="left:320px;top:557px;width:312.5px;height:1px;background:#e1e1e1;"></div>
<svg class="a" style="left:616px;top:407px;" width="10" height="14" viewBox="0 0 10 14"><path d="M2 1.6 L7.6 7 L2 12.4" fill="none" stroke="#555" stroke-width="1.4"/></svg>
<svg class="a" style="left:616px;top:439px;" width="10" height="14" viewBox="0 0 10 14"><path d="M2 1.6 L7.6 7 L2 12.4" fill="none" stroke="#9a9a9a" stroke-width="1.4"/></svg>
<svg class="a" style="left:616px;top:505px;" width="10" height="14" viewBox="0 0 10 14"><path d="M2 1.6 L7.6 7 L2 12.4" fill="none" stroke="#9a9a9a" stroke-width="1.4"/></svg>
<svg class="a" style="left:616px;top:533.5px;" width="10" height="14" viewBox="0 0 10 14"><path d="M2 1.6 L7.6 7 L2 12.4" fill="none" stroke="#555" stroke-width="1.4"/></svg>
<svg class="a" style="left:295px;top:468px;" width="23" height="23" viewBox="0 0 23 23"><g fill="none" stroke="#a9a9a9" stroke-width="1.4" stroke-linejoin="round"><path d="M1.6 2.2 H19.4 L12.4 10.4 V15 M8.6 18.6 V10.4 L1.6 2.2"/><path d="M13.2 14.2 L20.4 21.2 M20.4 14.2 L13.2 21.2"/></g></svg>
<div class="a" style="left:319px;top:566px;width:307.5px;height:23.5px;background:#fff;border:1px solid #a9a9a9;"></div>
<span class="t" id="t211" style="left:321.5px;top:568.85px;font-size:14.3px;color:#7c7c7c;transform:scaleX(0.8938);">Search</span>
<svg class="a" style="left:605px;top:567px;" width="22" height="22" viewBox="0 0 22 22"><g fill="none" stroke="#555" stroke-width="1.5"><circle cx="13.4" cy="8.2" r="6"/><path d="M9.2 12.6 L2 20"/></g></svg>
<div class="a" style="left:318px;top:593.5px;width:308px;height:297.5px;background:#fff;border:1px solid #dedede;"></div>
<div class="a" style="left:346px;top:598.4px;width:12.5px;height:12.5px;background:#fff;border:1.2px solid #333;"></div>
<svg class="a" style="left:346px;top:598.4px;" width="13" height="13" viewBox="0 0 13 13"><path d="M2.8 6.6 L5.4 9.4 L10.4 3.4" fill="none" stroke="#111" stroke-width="2.3"/></svg>
<span class="t" id="t212" style="left:363px;top:597.35px;font-size:14.3px;color:#1f1f1f;transform:scaleX(0.9657);">(Select All)</span>
<div class="a" style="left:334.5px;top:604.9px;width:11px;height:1px;background:transparent;border-top:1px dotted #8a8a8a;"></div>
<div class="a" style="left:346px;top:619.8px;width:12.5px;height:12.5px;background:#fff;border:1.2px solid #333;"></div>
<svg class="a" style="left:346px;top:619.8px;" width="13" height="13" viewBox="0 0 13 13"><path d="M2.8 6.6 L5.4 9.4 L10.4 3.4" fill="none" stroke="#111" stroke-width="2.3"/></svg>
<span class="t" id="t213" style="left:363px;top:618.85px;font-size:14.3px;color:#1f1f1f;transform:scaleX(1.0208);">Consumption</span>
<div class="a" style="left:334.5px;top:626.3px;width:11px;height:1px;background:transparent;border-top:1px dotted #8a8a8a;"></div>
<div class="a" style="left:346px;top:641.2px;width:12.5px;height:12.5px;background:#fff;border:1.2px solid #333;"></div>
<svg class="a" style="left:346px;top:641.2px;" width="13" height="13" viewBox="0 0 13 13"><path d="M2.8 6.6 L5.4 9.4 L10.4 3.4" fill="none" stroke="#111" stroke-width="2.3"/></svg>
<span class="t" id="t214" style="left:363px;top:640.35px;font-size:14.3px;color:#1f1f1f;transform:scaleX(0.9619);">Surplus Generation</span>
<div class="a" style="left:334.5px;top:647.7px;width:11px;height:1px;background:transparent;border-top:1px dotted #8a8a8a;"></div>
<div class="a" style="left:334.5px;top:606px;width:1px;height:44.5px;background:transparent;border-left:1px dotted #8a8a8a;"></div>
<div class="a" style="left:437px;top:914px;width:87.5px;height:24.5px;background:#e1e1e1;border:2px solid #0078d7;"></div>
<span class="t" id="t215" style="left:471.5px;top:919.35px;font-size:14.3px;color:#1f1f1f;transform:scaleX(0.9675);">OK</span>
<div class="a" style="left:538px;top:914px;width:87.5px;height:24.5px;background:#e1e1e1;border:1px solid #adadad;"></div>
<span class="t" id="t216" style="left:559.5px;top:919.35px;font-size:14.3px;color:#1f1f1f;transform:scaleX(0.9547);">Cancel</span>
<div class="a" style="left:283px;top:945px;width:350px;height:1px;background:#e6e6e6;"></div>
<div class="a" style="left:630.1px;top:947px;width:1.4px;height:1.4px;background:#9a9a9a;"></div>
<div class="a" style="left:627.3px;top:949.8px;width:1.4px;height:1.4px;background:#9a9a9a;"></div>
<div class="a" style="left:630.1px;top:949.8px;width:1.4px;height:1.4px;background:#9a9a9a;"></div>
<div class="a" style="left:624.5px;top:952.6px;width:1.4px;height:1.4px;background:#9a9a9a;"></div>
<div class="a" style="left:627.3px;top:952.6px;width:1.4px;height:1.4px;background:#9a9a9a;"></div>
<div class="a" style="left:630.1px;top:952.6px;width:1.4px;height:1.4px;background:#9a9a9a;"></div>
<svg class="a" style="left:597.8px;top:298.2px;filter:drop-shadow(1.5px 2.5px 2px rgba(0,0,0,.38))" width="53" height="47.6"><rect x="9.8" y="9.8" width="33.4" height="28" fill="none" stroke="#ee3c41" stroke-width="3.6"/></svg>
<svg class="a" style="left:304.5px;top:554px;filter:drop-shadow(1.5px 2.5px 2px rgba(0,0,0,.38))" width="246" height="134"><rect x="9.8" y="9.8" width="226.4" height="114.4" fill="none" stroke="#ee3c41" stroke-width="3.6"/></svg>
<div class="a" style="left:0px;top:0px;width:863px;height:3.6px;background:#652490;"></div>
<div class="a" style="left:4.6px;top:3.6px;width:855px;height:1.4px;background:#d9d3e2;"></div>
<div class="a" style="left:1.4px;top:0px;width:3.3px;height:976px;background:#652490;"></div>
<div class="a" style="left:859.4px;top:0px;width:3.6px;height:976px;background:#652490;"></div>
<div class="a" style="left:0px;top:972px;width:863px;height:4px;background:#652490;"></div>
<div class="a" style="left:0px;top:0px;width:1.4px;height:5px;background:#fff;"></div>
</body></html>
